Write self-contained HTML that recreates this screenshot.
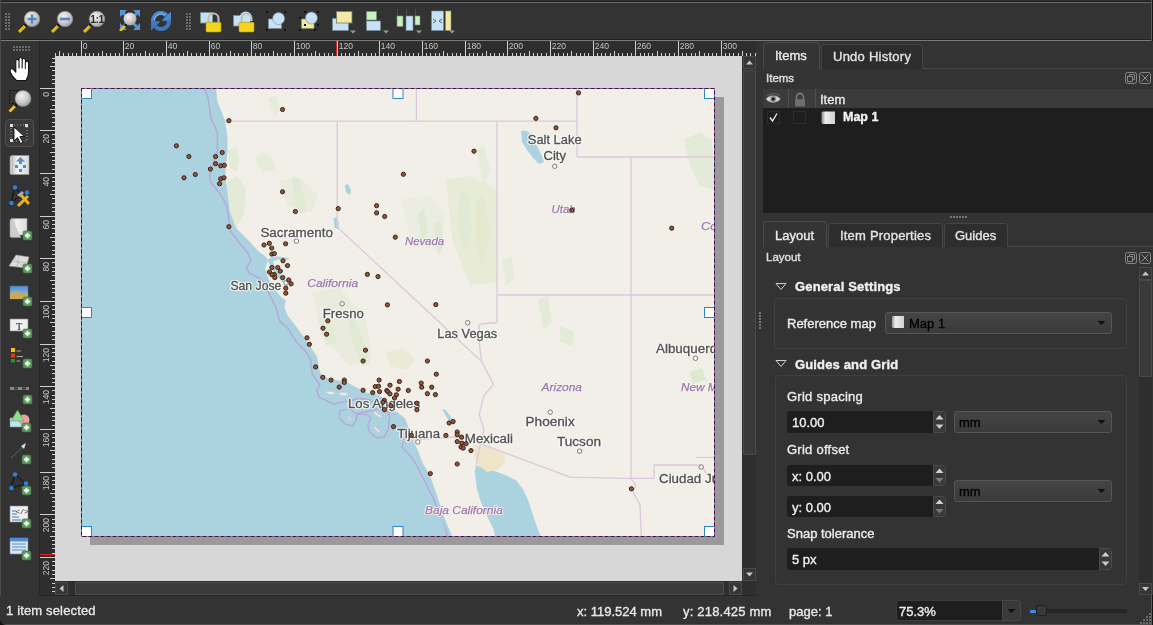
<!DOCTYPE html>
<html><head><meta charset="utf-8">
<style>
*{box-sizing:border-box;margin:0;padding:0}
html,body{width:1153px;height:625px;overflow:hidden;background:#323232;font-family:"Liberation Sans",sans-serif;color:#e0e0e0}
.a{position:absolute}
.t{white-space:nowrap;line-height:1;will-change:transform;-webkit-text-stroke:0.35px currentColor}
svg{will-change:transform}

</style></head><body>
<div class="a" style="left:0px;top:0px;width:1153px;height:1px;background:#2f2f2f;"></div>
<div class="a" style="left:0px;top:1px;width:1153px;height:1px;background:#1f1f1f;"></div>
<div class="a" style="left:0px;top:2px;width:1153px;height:1px;background:#6a6a6a;"></div>
<div class="a" style="left:0px;top:3px;width:1153px;height:36px;background:#333;"></div>
<div class="a" style="left:0px;top:39px;width:1153px;height:1px;background:#222;"></div>
<div class="a" style="left:0px;top:40px;width:1153px;height:1px;background:#7a7a7a;"></div>
<div class="a" style="left:0px;top:41px;width:39px;height:554px;background:#333;"></div>
<div class="a" style="left:39px;top:41px;width:1px;height:554px;background:#262626;"></div>
<div class="a" style="left:0px;top:0px;width:1px;height:625px;background:#4a4a4a;"></div>
<svg width="0" height="0" style="position:absolute">
<defs>
<radialGradient id="lens" cx="0.4" cy="0.35" r="0.7"><stop offset="0" stop-color="#f4f4f4"/><stop offset="0.6" stop-color="#c8c8c8"/><stop offset="1" stop-color="#9a9a9a"/></radialGradient>
<linearGradient id="blueg" x1="0" y1="0" x2="0" y2="1"><stop offset="0" stop-color="#7fb2e5"/><stop offset="1" stop-color="#3f7fc4"/></linearGradient>
<linearGradient id="paper" x1="0" y1="0" x2="1" y2="0"><stop offset="0" stop-color="#c8c8c8"/><stop offset="0.3" stop-color="#f0f0f0"/><stop offset="1" stop-color="#dcdcdc"/></linearGradient>
<linearGradient id="sky" x1="0" y1="0" x2="0" y2="1"><stop offset="0" stop-color="#4a8fd6"/><stop offset="1" stop-color="#a9cdee"/></linearGradient>
</defs></svg>
<div class="a" style="left:5px;top:13px;width:2px;height:2px;background:#6c6c6c"></div><div class="a" style="left:8px;top:13px;width:2px;height:2px;background:#6c6c6c"></div><div class="a" style="left:5px;top:16px;width:2px;height:2px;background:#6c6c6c"></div><div class="a" style="left:8px;top:16px;width:2px;height:2px;background:#6c6c6c"></div><div class="a" style="left:5px;top:19px;width:2px;height:2px;background:#6c6c6c"></div><div class="a" style="left:8px;top:19px;width:2px;height:2px;background:#6c6c6c"></div><div class="a" style="left:5px;top:22px;width:2px;height:2px;background:#6c6c6c"></div><div class="a" style="left:8px;top:22px;width:2px;height:2px;background:#6c6c6c"></div><div class="a" style="left:5px;top:25px;width:2px;height:2px;background:#6c6c6c"></div><div class="a" style="left:8px;top:25px;width:2px;height:2px;background:#6c6c6c"></div><div class="a" style="left:5px;top:28px;width:2px;height:2px;background:#6c6c6c"></div><div class="a" style="left:8px;top:28px;width:2px;height:2px;background:#6c6c6c"></div>
<svg class="a" style="left:15.5px;top:6.600000000000001px" width="28" height="28" viewBox="0 0 28 28"><line x1="3" y1="25" x2="9" y2="19" stroke="#e8c81a" stroke-width="3"/>
<line x1="3.5" y1="24.5" x2="8.5" y2="19.5" stroke="#a88a10" stroke-width="1" stroke-dasharray="1 1.5"/>
<circle cx="10" cy="18" r="1.6" fill="#111"/>
<circle cx="16" cy="12" r="7.8" fill="url(#lens)" stroke="#8a8a8a" stroke-width="0.6"/><path d="M16 7.5V16.5M11.5 12H20.5" stroke="#4f86c6" stroke-width="2.6"/></svg>
<svg class="a" style="left:48.5px;top:6.600000000000001px" width="28" height="28" viewBox="0 0 28 28"><line x1="3" y1="25" x2="9" y2="19" stroke="#e8c81a" stroke-width="3"/>
<line x1="3.5" y1="24.5" x2="8.5" y2="19.5" stroke="#a88a10" stroke-width="1" stroke-dasharray="1 1.5"/>
<circle cx="10" cy="18" r="1.6" fill="#111"/>
<circle cx="16" cy="12" r="7.8" fill="url(#lens)" stroke="#8a8a8a" stroke-width="0.6"/><path d="M11 12H21" stroke="#4f86c6" stroke-width="2.6"/></svg>
<svg class="a" style="left:81.3px;top:6.600000000000001px" width="28" height="28" viewBox="0 0 28 28"><line x1="3" y1="25" x2="9" y2="19" stroke="#e8c81a" stroke-width="3"/>
<line x1="3.5" y1="24.5" x2="8.5" y2="19.5" stroke="#a88a10" stroke-width="1" stroke-dasharray="1 1.5"/>
<circle cx="10" cy="18" r="1.6" fill="#111"/>
<circle cx="16" cy="12" r="7.8" fill="url(#lens)" stroke="#8a8a8a" stroke-width="0.6"/><text x="16" y="15.8" text-anchor="middle" font-size="10.5" font-weight="700" fill="#2a2a2a" font-family="Liberation Sans" letter-spacing="-0.6">1:1</text></svg>
<svg class="a" style="left:119px;top:9px" width="22" height="22" viewBox="0 0 22 22"><path d="M1 1H8L5.5 3.5L8.5 6.5L6.5 8.5L3.5 5.5L1 8Z" fill="#5b93d3"/>
<path d="M21 1H14L16.5 3.5L13.5 6.5L15.5 8.5L18.5 5.5L21 8Z" fill="#5b93d3"/>
<path d="M1 21H8L5.5 18.5L8.5 15.5L6.5 13.5L3.5 16.5L1 14Z" fill="#5b93d3"/>
<path d="M21 21H14L16.5 18.5L13.5 15.5L15.5 13.5L18.5 16.5L21 14Z" fill="#5b93d3"/>
<circle cx="11" cy="10" r="6.5" fill="url(#lens)"/>
<line x1="1" y1="22" x2="6" y2="17" stroke="#e8c81a" stroke-width="2.6"/><circle cx="6.5" cy="16" r="1.3" fill="#111"/></svg>
<svg class="a" style="left:150px;top:10px" width="22" height="22" viewBox="0 0 22 22"><path d="M3.2 12.5A7.8 7.8 0 0 1 16.5 5.5" stroke="#4f8ad0" stroke-width="4.2" fill="none"/>
<polygon points="21,1.5 21,11.5 11.5,10.5" fill="#4f8ad0"/>
<path d="M18.8 9.5A7.8 7.8 0 0 1 5.5 16.5" stroke="#3f78c0" stroke-width="4.2" fill="none"/>
<polygon points="1,20.5 1,10.5 10.5,11.5" fill="#3f78c0"/>
<path d="M4.5 10A6.5 6.5 0 0 1 15 5" stroke="#8fc0ee" stroke-width="1" fill="none"/></svg>
<div class="a" style="left:186px;top:13px;width:2px;height:2px;background:#6c6c6c"></div><div class="a" style="left:189px;top:13px;width:2px;height:2px;background:#6c6c6c"></div><div class="a" style="left:186px;top:16px;width:2px;height:2px;background:#6c6c6c"></div><div class="a" style="left:189px;top:16px;width:2px;height:2px;background:#6c6c6c"></div><div class="a" style="left:186px;top:19px;width:2px;height:2px;background:#6c6c6c"></div><div class="a" style="left:189px;top:19px;width:2px;height:2px;background:#6c6c6c"></div><div class="a" style="left:186px;top:22px;width:2px;height:2px;background:#6c6c6c"></div><div class="a" style="left:189px;top:22px;width:2px;height:2px;background:#6c6c6c"></div><div class="a" style="left:186px;top:25px;width:2px;height:2px;background:#6c6c6c"></div><div class="a" style="left:189px;top:25px;width:2px;height:2px;background:#6c6c6c"></div><div class="a" style="left:186px;top:28px;width:2px;height:2px;background:#6c6c6c"></div><div class="a" style="left:189px;top:28px;width:2px;height:2px;background:#6c6c6c"></div>
<svg class="a" style="left:198px;top:10px" width="26" height="24" viewBox="0 0 26 24"><rect x="2.5" y="2.5" width="12" height="10.5" fill="#c6e2f6" stroke="#7a8a96" stroke-width="0.8"/>
<path d="M10.5 12.5V8.5A5 5 0 0 1 20.5 8.5V12.5" fill="none" stroke="#bdbdbd" stroke-width="2.2"/>
<rect x="8" y="12.2" width="15" height="9.8" rx="1.2" fill="#f0d41e" stroke="#b49a10" stroke-width="0.6"/></svg>
<svg class="a" style="left:231px;top:10px" width="26" height="24" viewBox="0 0 26 24"><rect x="2.5" y="5.5" width="8" height="10.5" fill="#c6e2f6" stroke="#7a8a96" stroke-width="0.8"/>
<circle cx="14.8" cy="7.5" r="6" fill="#c6e2f6"/>
<path d="M10.5 12.5V8.5A5 5 0 0 1 20.5 8.5V11" fill="none" stroke="#bdbdbd" stroke-width="2"/>
<rect x="8" y="12.2" width="15" height="9.8" rx="1.2" fill="#f0d41e" stroke="#b49a10" stroke-width="0.6"/></svg>
<svg class="a" style="left:264px;top:9px" width="26" height="24" viewBox="0 0 26 24"><rect x="4.5" y="10" width="13" height="9.5" fill="#c6e2f6" stroke="#7a8a96" stroke-width="0.6"/>
<circle cx="14.6" cy="9.6" r="6" fill="#c6e2f6" stroke="#7a8a96" stroke-width="0.6"/>
<rect x="2" y="2" width="2" height="2" fill="#111"/><rect x="20" y="2" width="2" height="2" fill="#111"/>
<rect x="2" y="20" width="2" height="2" fill="#111"/><rect x="20" y="20" width="2" height="2" fill="#111"/></svg>
<svg class="a" style="left:297px;top:9px" width="26" height="24" viewBox="0 0 26 24"><rect x="4.5" y="10" width="12.5" height="9.5" fill="#f2eaa0" stroke="#7a8a6a" stroke-width="0.6"/>
<circle cx="14.4" cy="9" r="6" fill="#c6e2f6" stroke="#7a8a96" stroke-width="0.6"/>
<rect x="7" y="2" width="2" height="2" fill="#111"/><rect x="20" y="2" width="2" height="2" fill="#111"/>
<rect x="2" y="8" width="2" height="2" fill="#111"/><rect x="20" y="15" width="2" height="2" fill="#111"/>
<rect x="7" y="15" width="2" height="2" fill="#111"/>
<rect x="2" y="20" width="2" height="2" fill="#111"/><rect x="17" y="20" width="2" height="2" fill="#111"/></svg>
<svg class="a" style="left:330px;top:9px" width="28" height="26" viewBox="0 0 28 26"><rect x="2.5" y="9.5" width="16" height="12" fill="#c6e2f6" stroke="#7a8a96" stroke-width="0.6"/>
<rect x="6.5" y="2.5" width="15.5" height="11.5" fill="#f2eaa0" stroke="#7a7a6a" stroke-width="0.8"/><polygon points="20,21.5 26,21.5 23,24.5" fill="#9a9a9a"/></svg>
<svg class="a" style="left:364px;top:9px" width="28" height="26" viewBox="0 0 28 26"><rect x="2.5" y="2.5" width="10" height="8.5" fill="#c6f2c0" stroke="#7a8a7a" stroke-width="0.6"/>
<rect x="2.5" y="12" width="14" height="9.5" fill="#c6e2f6" stroke="#7a8a96" stroke-width="0.6"/><polygon points="19,21.5 25,21.5 22,24.5" fill="#9a9a9a"/></svg>
<svg class="a" style="left:395px;top:9px" width="30" height="26" viewBox="0 0 30 26"><path d="M2.5 0V7M11.5 0V9M20.5 0V9" stroke="#555" stroke-width="0.8"/>
<rect x="2" y="7" width="6" height="10.5" fill="#c6f2c0" stroke="#7a8a7a" stroke-width="0.6"/>
<rect x="11" y="7" width="7" height="14.5" fill="#c6e2f6" stroke="#7a8a96" stroke-width="0.6"/>
<rect x="20" y="7" width="5" height="9" fill="#c6f2c0" stroke="#7a8a7a" stroke-width="0.6"/><polygon points="21,21.5 27,21.5 24,24.5" fill="#9a9a9a"/></svg>
<svg class="a" style="left:429px;top:9px" width="30" height="26" viewBox="0 0 30 26"><rect x="2.5" y="2" width="12" height="19.5" fill="#c6e2f6" stroke="#7a8a96" stroke-width="0.6"/>
<path d="M4 10L7 12L4 14M13 10L10 12L13 14" fill="none" stroke="#555" stroke-width="0.9"/>
<rect x="16.5" y="2" width="5.5" height="19.5" fill="#f2eaa0" stroke="#8a8a6a" stroke-width="0.6"/><polygon points="20,21.5 26,21.5 23,24.5" fill="#9a9a9a"/></svg>
<div class="a" style="left:13px;top:46px;width:2px;height:2px;background:#6c6c6c"></div><div class="a" style="left:16px;top:46px;width:2px;height:2px;background:#6c6c6c"></div><div class="a" style="left:19px;top:46px;width:2px;height:2px;background:#6c6c6c"></div><div class="a" style="left:22px;top:46px;width:2px;height:2px;background:#6c6c6c"></div><div class="a" style="left:25px;top:46px;width:2px;height:2px;background:#6c6c6c"></div><div class="a" style="left:28px;top:46px;width:2px;height:2px;background:#6c6c6c"></div><div class="a" style="left:13px;top:49px;width:2px;height:2px;background:#6c6c6c"></div><div class="a" style="left:16px;top:49px;width:2px;height:2px;background:#6c6c6c"></div><div class="a" style="left:19px;top:49px;width:2px;height:2px;background:#6c6c6c"></div><div class="a" style="left:22px;top:49px;width:2px;height:2px;background:#6c6c6c"></div><div class="a" style="left:25px;top:49px;width:2px;height:2px;background:#6c6c6c"></div><div class="a" style="left:28px;top:49px;width:2px;height:2px;background:#6c6c6c"></div>
<svg class="a" style="left:9px;top:56px" width="22" height="26" viewBox="0 0 22 26"><path d="M7.5 24.5C4.5 21.5 1 16.5 1 14.5C1 12.5 3.2 12.2 4.8 13.8L6.8 16.2V5.2C6.8 3 10 3 10 5.2V12V3.2C10 1 13.2 1 13.2 3.2V12V4.2C13.2 2 16.4 2 16.4 4.2V12.5V6.8C16.4 4.6 19.6 4.6 19.6 6.8V15.5C19.6 19.5 18.5 22 17 24.5Z" fill="#fff" stroke="#111" stroke-width="1.1" stroke-linejoin="round"/>
<path d="M10 12V8M13.2 12V8M16.4 12.5V9" stroke="#777" stroke-width="0.6"/></svg>
<svg class="a" style="left:8px;top:89px" width="26" height="25" viewBox="0 0 26 25"><rect x="1.5" y="1.5" width="8" height="13" fill="none" stroke="#111" stroke-width="1" stroke-dasharray="2 1.5"/>
<line x1="1.5" y1="22.5" x2="7" y2="17" stroke="#e8c81a" stroke-width="2.8"/><circle cx="8" cy="16" r="1.5" fill="#111"/>
<circle cx="15" cy="9.5" r="8" fill="url(#lens)" stroke="#8a8a8a" stroke-width="0.6"/></svg>
<div class="a" style="left:5px;top:119px;width:29px;height:28px;background:#3a3a3a;border:1px solid #505050;border-radius:4px"></div>
<svg class="a" style="left:9px;top:123px" width="22" height="22" viewBox="0 0 22 22"><rect x="2" y="2" width="16" height="16" fill="none" stroke="#bbb" stroke-width="0.8" stroke-dasharray="1 2"/>
<rect x="1" y="1" width="3" height="3" fill="#ddd"/><rect x="16" y="1" width="3" height="3" fill="#ddd"/><rect x="1" y="16" width="3" height="3" fill="#ddd"/>
<path d="M5 4L5 18L8.5 14.5L11.5 20.5L13.8 19.3L10.8 13.5L15.5 13.5Z" fill="#fff" stroke="#111" stroke-width="0.9"/></svg>
<svg class="a" style="left:9px;top:154px" width="22" height="22" viewBox="0 0 22 22"><path d="M3 1.5H20V20.5H3Z" fill="url(#paper)" stroke="#999" stroke-width="0.6"/>
<path d="M3 1.5C1.5 1.5 1 3 1 4V19C1 20 2 20.5 3 20.5" fill="#ccc" stroke="#999" stroke-width="0.6"/>
<path d="M11.5 3L16 7.5H13V10H10V7.5H7Z" fill="#4f8fd6"/>
<rect x="6" y="11" width="3" height="3" fill="#4f8fd6"/><rect x="14" y="11" width="3" height="3" fill="#4f8fd6"/><rect x="10" y="15" width="3" height="3" fill="#4f8fd6"/></svg>
<svg class="a" style="left:9px;top:185px" width="23" height="23" viewBox="0 0 23 23"><path d="M6 2L2 18L12 10Z" fill="none" stroke="#111" stroke-width="1"/>
<circle cx="6" cy="2.5" r="2.2" fill="#2f7fe0"/><circle cx="2.5" cy="18" r="2.2" fill="#2f7fe0"/><circle cx="18" cy="7.5" r="2.2" fill="#2f7fe0"/>
<path d="M9 21L19 11" stroke="#e8b21a" stroke-width="3"/><path d="M11 9L20 19" stroke="#e8b21a" stroke-width="3"/>
<path d="M8 10L13 6L15 8L11 12Z" fill="#aaa"/></svg>
<svg class="a" style="left:9px;top:217px" width="24" height="24" viewBox="0 0 24 24"><path d="M3 1.5H18V18H3Z" fill="url(#paper)" stroke="#999" stroke-width="0.6"/>
<path d="M3 1.5C1.5 1.5 1 3 1 4V19C1 20 2 20.5 3 20.5H12" fill="#ccc" stroke="#999" stroke-width="0.6"/><rect x="14" y="14" width="9" height="9" rx="1.5" fill="#5a9a5a" stroke="#3d6e3d" stroke-width="0.6"/><path d="M18.5 15.8V21.2M15.8 18.5H21.2" stroke="#fff" stroke-width="1.8"/></svg>
<svg class="a" style="left:8px;top:252px" width="25" height="22" viewBox="0 0 25 22"><path d="M1 14L8 3L21 5L18 16Z" fill="#ddd" stroke="#999" stroke-width="0.6"/>
<path d="M4 9L19 11M6 6L15 15M11 4L9 15" stroke="#aaa" stroke-width="0.6"/><rect x="15" y="12" width="9" height="9" rx="1.5" fill="#5a9a5a" stroke="#3d6e3d" stroke-width="0.6"/><path d="M19.5 13.8V19.2M16.8 16.5H22.2" stroke="#fff" stroke-width="1.8"/></svg>
<svg class="a" style="left:9px;top:285px" width="24" height="22" viewBox="0 0 24 22"><rect x="1" y="1" width="18" height="13" fill="url(#sky)" stroke="#666" stroke-width="0.6"/>
<path d="M1 14V9C6 5 10 6 14 9L19 8V14Z" fill="#c9a85a"/><rect x="14" y="12" width="9" height="9" rx="1.5" fill="#5a9a5a" stroke="#3d6e3d" stroke-width="0.6"/><path d="M18.5 13.8V19.2M15.8 16.5H21.2" stroke="#fff" stroke-width="1.8"/></svg>
<svg class="a" style="left:9px;top:317px" width="24" height="22" viewBox="0 0 24 22"><rect x="1" y="2" width="18" height="12" fill="#f0f0f0" stroke="#888" stroke-width="0.6"/>
<text x="10" y="12.5" text-anchor="middle" font-size="11" fill="#222" font-family="Liberation Serif">T</text><rect x="14" y="12" width="9" height="9" rx="1.5" fill="#5a9a5a" stroke="#3d6e3d" stroke-width="0.6"/><path d="M18.5 13.8V19.2M15.8 16.5H21.2" stroke="#fff" stroke-width="1.8"/></svg>
<svg class="a" style="left:9px;top:347px" width="24" height="22" viewBox="0 0 24 22"><rect x="2" y="1" width="4" height="4" fill="#f5c400"/><rect x="2" y="6.5" width="4" height="4" fill="#e84000"/><rect x="2" y="12" width="4" height="3.5" fill="#1a9a30"/>
<path d="M7.5 4H12M7.5 9.5H14M7.5 14H11" stroke="#aaa" stroke-width="1.2"/><rect x="14" y="12" width="9" height="9" rx="1.5" fill="#5a9a5a" stroke="#3d6e3d" stroke-width="0.6"/><path d="M18.5 13.8V19.2M15.8 16.5H21.2" stroke="#fff" stroke-width="1.8"/></svg>
<svg class="a" style="left:9px;top:385px" width="24" height="22" viewBox="0 0 24 22"><rect x="1" y="2" width="19" height="3" fill="#888"/><rect x="5" y="2.5" width="4" height="2" fill="#333"/><rect x="13" y="2.5" width="4" height="2" fill="#333"/><rect x="14" y="10" width="9" height="9" rx="1.5" fill="#5a9a5a" stroke="#3d6e3d" stroke-width="0.6"/><path d="M18.5 11.8V17.2M15.8 14.5H21.2" stroke="#fff" stroke-width="1.8"/></svg>
<svg class="a" style="left:9px;top:409px" width="24" height="24" viewBox="0 0 24 24"><rect x="1" y="9" width="12" height="9" fill="#c6e2f6" stroke="#7a8a96" stroke-width="0.6"/>
<circle cx="15" cy="11" r="5.5" fill="#f0a0a0"/>
<path d="M8.5 1L15 12H2Z" fill="#8fdc8f" stroke="#6a9a6a" stroke-width="0.6"/><rect x="13" y="14" width="9" height="9" rx="1.5" fill="#5a9a5a" stroke="#3d6e3d" stroke-width="0.6"/><path d="M17.5 15.8V21.2M14.8 18.5H20.2" stroke="#fff" stroke-width="1.8"/></svg>
<svg class="a" style="left:9px;top:441px" width="24" height="24" viewBox="0 0 24 24"><path d="M2 17L15 5" stroke="#666" stroke-width="1"/><polygon points="17,2 15,8 12,5" fill="#ddd"/><rect x="13" y="14" width="9" height="9" rx="1.5" fill="#5a9a5a" stroke="#3d6e3d" stroke-width="0.6"/><path d="M17.5 15.8V21.2M14.8 18.5H20.2" stroke="#fff" stroke-width="1.8"/></svg>
<svg class="a" style="left:9px;top:472px" width="24" height="24" viewBox="0 0 24 24"><path d="M6 2L2 16L17 12Z" fill="none" stroke="#111" stroke-width="1"/>
<circle cx="6" cy="2.5" r="2.2" fill="#2f7fe0"/><circle cx="2.5" cy="16" r="2.2" fill="#2f7fe0"/><circle cx="17" cy="11.5" r="2.2" fill="#2f7fe0"/><rect x="13" y="14" width="9" height="9" rx="1.5" fill="#5a9a5a" stroke="#3d6e3d" stroke-width="0.6"/><path d="M17.5 15.8V21.2M14.8 18.5H20.2" stroke="#fff" stroke-width="1.8"/></svg>
<svg class="a" style="left:9px;top:505px" width="24" height="24" viewBox="0 0 24 24"><rect x="1" y="1" width="18" height="16" fill="#f0f0f0" stroke="#888" stroke-width="0.6"/>
<path d="M3 6H7M3 9H8M3 12H10M3 15H12" stroke="#3a7ac0" stroke-width="1.2"/>
<text x="13" y="9" text-anchor="middle" font-size="7" fill="#222" font-family="Liberation Mono">&lt;/&gt;</text><rect x="13" y="14" width="9" height="9" rx="1.5" fill="#5a9a5a" stroke="#3d6e3d" stroke-width="0.6"/><path d="M17.5 15.8V21.2M14.8 18.5H20.2" stroke="#fff" stroke-width="1.8"/></svg>
<svg class="a" style="left:9px;top:537px" width="24" height="24" viewBox="0 0 24 24"><rect x="1" y="1" width="18" height="16" fill="#dde8f4" stroke="#5a8ac0" stroke-width="0.6"/>
<rect x="1" y="1" width="18" height="3.5" fill="#4f8fd6"/>
<path d="M3 7H17M3 10H17M3 13H17" stroke="#5a8ac0" stroke-width="1"/><rect x="13" y="14" width="9" height="9" rx="1.5" fill="#5a9a5a" stroke="#3d6e3d" stroke-width="0.6"/><path d="M17.5 15.8V21.2M14.8 18.5H20.2" stroke="#fff" stroke-width="1.8"/></svg>
<svg class="a" style="left:40px;top:41px;overflow:hidden" width="716" height="15" viewBox="40 41 716 15"><rect x="40" y="41" width="716" height="15" fill="#2e2e2e"/><line x1="55.5" y1="53" x2="55.5" y2="56" stroke="#d0d0d0" stroke-width="1"/><line x1="59.5" y1="51" x2="59.5" y2="56" stroke="#d0d0d0" stroke-width="1"/><line x1="63.5" y1="53" x2="63.5" y2="56" stroke="#d0d0d0" stroke-width="1"/><line x1="68.5" y1="53" x2="68.5" y2="56" stroke="#d0d0d0" stroke-width="1"/><line x1="72.5" y1="53" x2="72.5" y2="56" stroke="#d0d0d0" stroke-width="1"/><line x1="76.5" y1="53" x2="76.5" y2="56" stroke="#d0d0d0" stroke-width="1"/><line x1="81.5" y1="41" x2="81.5" y2="56" stroke="#d0d0d0" stroke-width="1"/><text x="82.8" y="48.9" font-size="8.6" fill="#c4c4c4" font-family="Liberation Sans">0</text><line x1="85.5" y1="53" x2="85.5" y2="56" stroke="#d0d0d0" stroke-width="1"/><line x1="89.5" y1="53" x2="89.5" y2="56" stroke="#d0d0d0" stroke-width="1"/><line x1="93.5" y1="53" x2="93.5" y2="56" stroke="#d0d0d0" stroke-width="1"/><line x1="98.5" y1="53" x2="98.5" y2="56" stroke="#d0d0d0" stroke-width="1"/><line x1="102.5" y1="51" x2="102.5" y2="56" stroke="#d0d0d0" stroke-width="1"/><line x1="106.5" y1="53" x2="106.5" y2="56" stroke="#d0d0d0" stroke-width="1"/><line x1="110.5" y1="53" x2="110.5" y2="56" stroke="#d0d0d0" stroke-width="1"/><line x1="115.5" y1="53" x2="115.5" y2="56" stroke="#d0d0d0" stroke-width="1"/><line x1="119.5" y1="53" x2="119.5" y2="56" stroke="#d0d0d0" stroke-width="1"/><line x1="123.5" y1="41" x2="123.5" y2="56" stroke="#d0d0d0" stroke-width="1"/><text x="124.8" y="48.9" font-size="8.6" fill="#c4c4c4" font-family="Liberation Sans">20</text><line x1="127.5" y1="53" x2="127.5" y2="56" stroke="#d0d0d0" stroke-width="1"/><line x1="132.5" y1="53" x2="132.5" y2="56" stroke="#d0d0d0" stroke-width="1"/><line x1="136.5" y1="53" x2="136.5" y2="56" stroke="#d0d0d0" stroke-width="1"/><line x1="140.5" y1="53" x2="140.5" y2="56" stroke="#d0d0d0" stroke-width="1"/><line x1="145.5" y1="51" x2="145.5" y2="56" stroke="#d0d0d0" stroke-width="1"/><line x1="149.5" y1="53" x2="149.5" y2="56" stroke="#d0d0d0" stroke-width="1"/><line x1="153.5" y1="53" x2="153.5" y2="56" stroke="#d0d0d0" stroke-width="1"/><line x1="157.5" y1="53" x2="157.5" y2="56" stroke="#d0d0d0" stroke-width="1"/><line x1="162.5" y1="53" x2="162.5" y2="56" stroke="#d0d0d0" stroke-width="1"/><line x1="166.5" y1="41" x2="166.5" y2="56" stroke="#d0d0d0" stroke-width="1"/><text x="167.8" y="48.9" font-size="8.6" fill="#c4c4c4" font-family="Liberation Sans">40</text><line x1="170.5" y1="53" x2="170.5" y2="56" stroke="#d0d0d0" stroke-width="1"/><line x1="174.5" y1="53" x2="174.5" y2="56" stroke="#d0d0d0" stroke-width="1"/><line x1="179.5" y1="53" x2="179.5" y2="56" stroke="#d0d0d0" stroke-width="1"/><line x1="183.5" y1="53" x2="183.5" y2="56" stroke="#d0d0d0" stroke-width="1"/><line x1="187.5" y1="51" x2="187.5" y2="56" stroke="#d0d0d0" stroke-width="1"/><line x1="191.5" y1="53" x2="191.5" y2="56" stroke="#d0d0d0" stroke-width="1"/><line x1="196.5" y1="53" x2="196.5" y2="56" stroke="#d0d0d0" stroke-width="1"/><line x1="200.5" y1="53" x2="200.5" y2="56" stroke="#d0d0d0" stroke-width="1"/><line x1="204.5" y1="53" x2="204.5" y2="56" stroke="#d0d0d0" stroke-width="1"/><line x1="209.5" y1="41" x2="209.5" y2="56" stroke="#d0d0d0" stroke-width="1"/><text x="210.8" y="48.9" font-size="8.6" fill="#c4c4c4" font-family="Liberation Sans">60</text><line x1="213.5" y1="53" x2="213.5" y2="56" stroke="#d0d0d0" stroke-width="1"/><line x1="217.5" y1="53" x2="217.5" y2="56" stroke="#d0d0d0" stroke-width="1"/><line x1="221.5" y1="53" x2="221.5" y2="56" stroke="#d0d0d0" stroke-width="1"/><line x1="226.5" y1="53" x2="226.5" y2="56" stroke="#d0d0d0" stroke-width="1"/><line x1="230.5" y1="51" x2="230.5" y2="56" stroke="#d0d0d0" stroke-width="1"/><line x1="234.5" y1="53" x2="234.5" y2="56" stroke="#d0d0d0" stroke-width="1"/><line x1="238.5" y1="53" x2="238.5" y2="56" stroke="#d0d0d0" stroke-width="1"/><line x1="243.5" y1="53" x2="243.5" y2="56" stroke="#d0d0d0" stroke-width="1"/><line x1="247.5" y1="53" x2="247.5" y2="56" stroke="#d0d0d0" stroke-width="1"/><line x1="251.5" y1="41" x2="251.5" y2="56" stroke="#d0d0d0" stroke-width="1"/><text x="252.8" y="48.9" font-size="8.6" fill="#c4c4c4" font-family="Liberation Sans">80</text><line x1="255.5" y1="53" x2="255.5" y2="56" stroke="#d0d0d0" stroke-width="1"/><line x1="260.5" y1="53" x2="260.5" y2="56" stroke="#d0d0d0" stroke-width="1"/><line x1="264.5" y1="53" x2="264.5" y2="56" stroke="#d0d0d0" stroke-width="1"/><line x1="268.5" y1="53" x2="268.5" y2="56" stroke="#d0d0d0" stroke-width="1"/><line x1="273.5" y1="51" x2="273.5" y2="56" stroke="#d0d0d0" stroke-width="1"/><line x1="277.5" y1="53" x2="277.5" y2="56" stroke="#d0d0d0" stroke-width="1"/><line x1="281.5" y1="53" x2="281.5" y2="56" stroke="#d0d0d0" stroke-width="1"/><line x1="285.5" y1="53" x2="285.5" y2="56" stroke="#d0d0d0" stroke-width="1"/><line x1="290.5" y1="53" x2="290.5" y2="56" stroke="#d0d0d0" stroke-width="1"/><line x1="294.5" y1="41" x2="294.5" y2="56" stroke="#d0d0d0" stroke-width="1"/><text x="295.8" y="48.9" font-size="8.6" fill="#c4c4c4" font-family="Liberation Sans">100</text><line x1="298.5" y1="53" x2="298.5" y2="56" stroke="#d0d0d0" stroke-width="1"/><line x1="302.5" y1="53" x2="302.5" y2="56" stroke="#d0d0d0" stroke-width="1"/><line x1="307.5" y1="53" x2="307.5" y2="56" stroke="#d0d0d0" stroke-width="1"/><line x1="311.5" y1="53" x2="311.5" y2="56" stroke="#d0d0d0" stroke-width="1"/><line x1="315.5" y1="51" x2="315.5" y2="56" stroke="#d0d0d0" stroke-width="1"/><line x1="319.5" y1="53" x2="319.5" y2="56" stroke="#d0d0d0" stroke-width="1"/><line x1="324.5" y1="53" x2="324.5" y2="56" stroke="#d0d0d0" stroke-width="1"/><line x1="328.5" y1="53" x2="328.5" y2="56" stroke="#d0d0d0" stroke-width="1"/><line x1="332.5" y1="53" x2="332.5" y2="56" stroke="#d0d0d0" stroke-width="1"/><line x1="337.5" y1="41" x2="337.5" y2="56" stroke="#d0d0d0" stroke-width="1"/><text x="338.8" y="48.9" font-size="8.6" fill="#c4c4c4" font-family="Liberation Sans">120</text><line x1="341.5" y1="53" x2="341.5" y2="56" stroke="#d0d0d0" stroke-width="1"/><line x1="345.5" y1="53" x2="345.5" y2="56" stroke="#d0d0d0" stroke-width="1"/><line x1="349.5" y1="53" x2="349.5" y2="56" stroke="#d0d0d0" stroke-width="1"/><line x1="354.5" y1="53" x2="354.5" y2="56" stroke="#d0d0d0" stroke-width="1"/><line x1="358.5" y1="51" x2="358.5" y2="56" stroke="#d0d0d0" stroke-width="1"/><line x1="362.5" y1="53" x2="362.5" y2="56" stroke="#d0d0d0" stroke-width="1"/><line x1="366.5" y1="53" x2="366.5" y2="56" stroke="#d0d0d0" stroke-width="1"/><line x1="371.5" y1="53" x2="371.5" y2="56" stroke="#d0d0d0" stroke-width="1"/><line x1="375.5" y1="53" x2="375.5" y2="56" stroke="#d0d0d0" stroke-width="1"/><line x1="379.5" y1="41" x2="379.5" y2="56" stroke="#d0d0d0" stroke-width="1"/><text x="380.8" y="48.9" font-size="8.6" fill="#c4c4c4" font-family="Liberation Sans">140</text><line x1="383.5" y1="53" x2="383.5" y2="56" stroke="#d0d0d0" stroke-width="1"/><line x1="388.5" y1="53" x2="388.5" y2="56" stroke="#d0d0d0" stroke-width="1"/><line x1="392.5" y1="53" x2="392.5" y2="56" stroke="#d0d0d0" stroke-width="1"/><line x1="396.5" y1="53" x2="396.5" y2="56" stroke="#d0d0d0" stroke-width="1"/><line x1="401.5" y1="51" x2="401.5" y2="56" stroke="#d0d0d0" stroke-width="1"/><line x1="405.5" y1="53" x2="405.5" y2="56" stroke="#d0d0d0" stroke-width="1"/><line x1="409.5" y1="53" x2="409.5" y2="56" stroke="#d0d0d0" stroke-width="1"/><line x1="413.5" y1="53" x2="413.5" y2="56" stroke="#d0d0d0" stroke-width="1"/><line x1="418.5" y1="53" x2="418.5" y2="56" stroke="#d0d0d0" stroke-width="1"/><line x1="422.5" y1="41" x2="422.5" y2="56" stroke="#d0d0d0" stroke-width="1"/><text x="423.8" y="48.9" font-size="8.6" fill="#c4c4c4" font-family="Liberation Sans">160</text><line x1="426.5" y1="53" x2="426.5" y2="56" stroke="#d0d0d0" stroke-width="1"/><line x1="430.5" y1="53" x2="430.5" y2="56" stroke="#d0d0d0" stroke-width="1"/><line x1="435.5" y1="53" x2="435.5" y2="56" stroke="#d0d0d0" stroke-width="1"/><line x1="439.5" y1="53" x2="439.5" y2="56" stroke="#d0d0d0" stroke-width="1"/><line x1="443.5" y1="51" x2="443.5" y2="56" stroke="#d0d0d0" stroke-width="1"/><line x1="447.5" y1="53" x2="447.5" y2="56" stroke="#d0d0d0" stroke-width="1"/><line x1="452.5" y1="53" x2="452.5" y2="56" stroke="#d0d0d0" stroke-width="1"/><line x1="456.5" y1="53" x2="456.5" y2="56" stroke="#d0d0d0" stroke-width="1"/><line x1="460.5" y1="53" x2="460.5" y2="56" stroke="#d0d0d0" stroke-width="1"/><line x1="465.5" y1="41" x2="465.5" y2="56" stroke="#d0d0d0" stroke-width="1"/><text x="466.8" y="48.9" font-size="8.6" fill="#c4c4c4" font-family="Liberation Sans">180</text><line x1="469.5" y1="53" x2="469.5" y2="56" stroke="#d0d0d0" stroke-width="1"/><line x1="473.5" y1="53" x2="473.5" y2="56" stroke="#d0d0d0" stroke-width="1"/><line x1="477.5" y1="53" x2="477.5" y2="56" stroke="#d0d0d0" stroke-width="1"/><line x1="482.5" y1="53" x2="482.5" y2="56" stroke="#d0d0d0" stroke-width="1"/><line x1="486.5" y1="51" x2="486.5" y2="56" stroke="#d0d0d0" stroke-width="1"/><line x1="490.5" y1="53" x2="490.5" y2="56" stroke="#d0d0d0" stroke-width="1"/><line x1="494.5" y1="53" x2="494.5" y2="56" stroke="#d0d0d0" stroke-width="1"/><line x1="499.5" y1="53" x2="499.5" y2="56" stroke="#d0d0d0" stroke-width="1"/><line x1="503.5" y1="53" x2="503.5" y2="56" stroke="#d0d0d0" stroke-width="1"/><line x1="507.5" y1="41" x2="507.5" y2="56" stroke="#d0d0d0" stroke-width="1"/><text x="508.8" y="48.9" font-size="8.6" fill="#c4c4c4" font-family="Liberation Sans">200</text><line x1="512.5" y1="53" x2="512.5" y2="56" stroke="#d0d0d0" stroke-width="1"/><line x1="516.5" y1="53" x2="516.5" y2="56" stroke="#d0d0d0" stroke-width="1"/><line x1="520.5" y1="53" x2="520.5" y2="56" stroke="#d0d0d0" stroke-width="1"/><line x1="524.5" y1="53" x2="524.5" y2="56" stroke="#d0d0d0" stroke-width="1"/><line x1="529.5" y1="51" x2="529.5" y2="56" stroke="#d0d0d0" stroke-width="1"/><line x1="533.5" y1="53" x2="533.5" y2="56" stroke="#d0d0d0" stroke-width="1"/><line x1="537.5" y1="53" x2="537.5" y2="56" stroke="#d0d0d0" stroke-width="1"/><line x1="541.5" y1="53" x2="541.5" y2="56" stroke="#d0d0d0" stroke-width="1"/><line x1="546.5" y1="53" x2="546.5" y2="56" stroke="#d0d0d0" stroke-width="1"/><line x1="550.5" y1="41" x2="550.5" y2="56" stroke="#d0d0d0" stroke-width="1"/><text x="551.8" y="48.9" font-size="8.6" fill="#c4c4c4" font-family="Liberation Sans">220</text><line x1="554.5" y1="53" x2="554.5" y2="56" stroke="#d0d0d0" stroke-width="1"/><line x1="558.5" y1="53" x2="558.5" y2="56" stroke="#d0d0d0" stroke-width="1"/><line x1="563.5" y1="53" x2="563.5" y2="56" stroke="#d0d0d0" stroke-width="1"/><line x1="567.5" y1="53" x2="567.5" y2="56" stroke="#d0d0d0" stroke-width="1"/><line x1="571.5" y1="51" x2="571.5" y2="56" stroke="#d0d0d0" stroke-width="1"/><line x1="576.5" y1="53" x2="576.5" y2="56" stroke="#d0d0d0" stroke-width="1"/><line x1="580.5" y1="53" x2="580.5" y2="56" stroke="#d0d0d0" stroke-width="1"/><line x1="584.5" y1="53" x2="584.5" y2="56" stroke="#d0d0d0" stroke-width="1"/><line x1="588.5" y1="53" x2="588.5" y2="56" stroke="#d0d0d0" stroke-width="1"/><line x1="593.5" y1="41" x2="593.5" y2="56" stroke="#d0d0d0" stroke-width="1"/><text x="594.8" y="48.9" font-size="8.6" fill="#c4c4c4" font-family="Liberation Sans">240</text><line x1="597.5" y1="53" x2="597.5" y2="56" stroke="#d0d0d0" stroke-width="1"/><line x1="601.5" y1="53" x2="601.5" y2="56" stroke="#d0d0d0" stroke-width="1"/><line x1="605.5" y1="53" x2="605.5" y2="56" stroke="#d0d0d0" stroke-width="1"/><line x1="610.5" y1="53" x2="610.5" y2="56" stroke="#d0d0d0" stroke-width="1"/><line x1="614.5" y1="51" x2="614.5" y2="56" stroke="#d0d0d0" stroke-width="1"/><line x1="618.5" y1="53" x2="618.5" y2="56" stroke="#d0d0d0" stroke-width="1"/><line x1="622.5" y1="53" x2="622.5" y2="56" stroke="#d0d0d0" stroke-width="1"/><line x1="627.5" y1="53" x2="627.5" y2="56" stroke="#d0d0d0" stroke-width="1"/><line x1="631.5" y1="53" x2="631.5" y2="56" stroke="#d0d0d0" stroke-width="1"/><line x1="635.5" y1="41" x2="635.5" y2="56" stroke="#d0d0d0" stroke-width="1"/><text x="636.8" y="48.9" font-size="8.6" fill="#c4c4c4" font-family="Liberation Sans">260</text><line x1="640.5" y1="53" x2="640.5" y2="56" stroke="#d0d0d0" stroke-width="1"/><line x1="644.5" y1="53" x2="644.5" y2="56" stroke="#d0d0d0" stroke-width="1"/><line x1="648.5" y1="53" x2="648.5" y2="56" stroke="#d0d0d0" stroke-width="1"/><line x1="652.5" y1="53" x2="652.5" y2="56" stroke="#d0d0d0" stroke-width="1"/><line x1="657.5" y1="51" x2="657.5" y2="56" stroke="#d0d0d0" stroke-width="1"/><line x1="661.5" y1="53" x2="661.5" y2="56" stroke="#d0d0d0" stroke-width="1"/><line x1="665.5" y1="53" x2="665.5" y2="56" stroke="#d0d0d0" stroke-width="1"/><line x1="669.5" y1="53" x2="669.5" y2="56" stroke="#d0d0d0" stroke-width="1"/><line x1="674.5" y1="53" x2="674.5" y2="56" stroke="#d0d0d0" stroke-width="1"/><line x1="678.5" y1="41" x2="678.5" y2="56" stroke="#d0d0d0" stroke-width="1"/><text x="679.8" y="48.9" font-size="8.6" fill="#c4c4c4" font-family="Liberation Sans">280</text><line x1="682.5" y1="53" x2="682.5" y2="56" stroke="#d0d0d0" stroke-width="1"/><line x1="686.5" y1="53" x2="686.5" y2="56" stroke="#d0d0d0" stroke-width="1"/><line x1="691.5" y1="53" x2="691.5" y2="56" stroke="#d0d0d0" stroke-width="1"/><line x1="695.5" y1="53" x2="695.5" y2="56" stroke="#d0d0d0" stroke-width="1"/><line x1="699.5" y1="51" x2="699.5" y2="56" stroke="#d0d0d0" stroke-width="1"/><line x1="704.5" y1="53" x2="704.5" y2="56" stroke="#d0d0d0" stroke-width="1"/><line x1="708.5" y1="53" x2="708.5" y2="56" stroke="#d0d0d0" stroke-width="1"/><line x1="712.5" y1="53" x2="712.5" y2="56" stroke="#d0d0d0" stroke-width="1"/><line x1="716.5" y1="53" x2="716.5" y2="56" stroke="#d0d0d0" stroke-width="1"/><line x1="721.5" y1="41" x2="721.5" y2="56" stroke="#d0d0d0" stroke-width="1"/><text x="722.8" y="48.9" font-size="8.6" fill="#c4c4c4" font-family="Liberation Sans">300</text><line x1="725.5" y1="53" x2="725.5" y2="56" stroke="#d0d0d0" stroke-width="1"/><line x1="729.5" y1="53" x2="729.5" y2="56" stroke="#d0d0d0" stroke-width="1"/><line x1="733.5" y1="53" x2="733.5" y2="56" stroke="#d0d0d0" stroke-width="1"/><line x1="738.5" y1="53" x2="738.5" y2="56" stroke="#d0d0d0" stroke-width="1"/><line x1="742.5" y1="51" x2="742.5" y2="56" stroke="#d0d0d0" stroke-width="1"/><line x1="746.5" y1="53" x2="746.5" y2="56" stroke="#d0d0d0" stroke-width="1"/><line x1="750.5" y1="53" x2="750.5" y2="56" stroke="#d0d0d0" stroke-width="1"/><line x1="755.5" y1="53" x2="755.5" y2="56" stroke="#d0d0d0" stroke-width="1"/><line x1="336.5" y1="41" x2="336.5" y2="56" stroke="#e02020" stroke-width="1"/></svg>
<svg class="a" style="left:40px;top:56px;overflow:hidden" width="15" height="539" viewBox="40 56 15 539"><rect x="40" y="56" width="15" height="539" fill="#2e2e2e"/><line x1="52" y1="58.5" x2="55" y2="58.5" stroke="#d0d0d0" stroke-width="1"/><line x1="52" y1="62.5" x2="55" y2="62.5" stroke="#d0d0d0" stroke-width="1"/><line x1="50" y1="66.5" x2="55" y2="66.5" stroke="#d0d0d0" stroke-width="1"/><line x1="52" y1="70.5" x2="55" y2="70.5" stroke="#d0d0d0" stroke-width="1"/><line x1="52" y1="75.5" x2="55" y2="75.5" stroke="#d0d0d0" stroke-width="1"/><line x1="52" y1="79.5" x2="55" y2="79.5" stroke="#d0d0d0" stroke-width="1"/><line x1="52" y1="83.5" x2="55" y2="83.5" stroke="#d0d0d0" stroke-width="1"/><line x1="40" y1="88.5" x2="55" y2="88.5" stroke="#d0d0d0" stroke-width="1"/><text transform="translate(48.6,92.0) rotate(-90)" text-anchor="end" font-size="8.6" fill="#c4c4c4" font-family="Liberation Sans">0</text><line x1="52" y1="92.5" x2="55" y2="92.5" stroke="#d0d0d0" stroke-width="1"/><line x1="52" y1="96.5" x2="55" y2="96.5" stroke="#d0d0d0" stroke-width="1"/><line x1="52" y1="100.5" x2="55" y2="100.5" stroke="#d0d0d0" stroke-width="1"/><line x1="52" y1="105.5" x2="55" y2="105.5" stroke="#d0d0d0" stroke-width="1"/><line x1="50" y1="109.5" x2="55" y2="109.5" stroke="#d0d0d0" stroke-width="1"/><line x1="52" y1="113.5" x2="55" y2="113.5" stroke="#d0d0d0" stroke-width="1"/><line x1="52" y1="117.5" x2="55" y2="117.5" stroke="#d0d0d0" stroke-width="1"/><line x1="52" y1="122.5" x2="55" y2="122.5" stroke="#d0d0d0" stroke-width="1"/><line x1="52" y1="126.5" x2="55" y2="126.5" stroke="#d0d0d0" stroke-width="1"/><line x1="40" y1="130.5" x2="55" y2="130.5" stroke="#d0d0d0" stroke-width="1"/><text transform="translate(48.6,134.0) rotate(-90)" text-anchor="end" font-size="8.6" fill="#c4c4c4" font-family="Liberation Sans">20</text><line x1="52" y1="134.5" x2="55" y2="134.5" stroke="#d0d0d0" stroke-width="1"/><line x1="52" y1="139.5" x2="55" y2="139.5" stroke="#d0d0d0" stroke-width="1"/><line x1="52" y1="143.5" x2="55" y2="143.5" stroke="#d0d0d0" stroke-width="1"/><line x1="52" y1="147.5" x2="55" y2="147.5" stroke="#d0d0d0" stroke-width="1"/><line x1="50" y1="152.5" x2="55" y2="152.5" stroke="#d0d0d0" stroke-width="1"/><line x1="52" y1="156.5" x2="55" y2="156.5" stroke="#d0d0d0" stroke-width="1"/><line x1="52" y1="160.5" x2="55" y2="160.5" stroke="#d0d0d0" stroke-width="1"/><line x1="52" y1="164.5" x2="55" y2="164.5" stroke="#d0d0d0" stroke-width="1"/><line x1="52" y1="169.5" x2="55" y2="169.5" stroke="#d0d0d0" stroke-width="1"/><line x1="40" y1="173.5" x2="55" y2="173.5" stroke="#d0d0d0" stroke-width="1"/><text transform="translate(48.6,177.0) rotate(-90)" text-anchor="end" font-size="8.6" fill="#c4c4c4" font-family="Liberation Sans">40</text><line x1="52" y1="177.5" x2="55" y2="177.5" stroke="#d0d0d0" stroke-width="1"/><line x1="52" y1="181.5" x2="55" y2="181.5" stroke="#d0d0d0" stroke-width="1"/><line x1="52" y1="186.5" x2="55" y2="186.5" stroke="#d0d0d0" stroke-width="1"/><line x1="52" y1="190.5" x2="55" y2="190.5" stroke="#d0d0d0" stroke-width="1"/><line x1="50" y1="194.5" x2="55" y2="194.5" stroke="#d0d0d0" stroke-width="1"/><line x1="52" y1="198.5" x2="55" y2="198.5" stroke="#d0d0d0" stroke-width="1"/><line x1="52" y1="203.5" x2="55" y2="203.5" stroke="#d0d0d0" stroke-width="1"/><line x1="52" y1="207.5" x2="55" y2="207.5" stroke="#d0d0d0" stroke-width="1"/><line x1="52" y1="211.5" x2="55" y2="211.5" stroke="#d0d0d0" stroke-width="1"/><line x1="40" y1="216.5" x2="55" y2="216.5" stroke="#d0d0d0" stroke-width="1"/><text transform="translate(48.6,220.0) rotate(-90)" text-anchor="end" font-size="8.6" fill="#c4c4c4" font-family="Liberation Sans">60</text><line x1="52" y1="220.5" x2="55" y2="220.5" stroke="#d0d0d0" stroke-width="1"/><line x1="52" y1="224.5" x2="55" y2="224.5" stroke="#d0d0d0" stroke-width="1"/><line x1="52" y1="228.5" x2="55" y2="228.5" stroke="#d0d0d0" stroke-width="1"/><line x1="52" y1="233.5" x2="55" y2="233.5" stroke="#d0d0d0" stroke-width="1"/><line x1="50" y1="237.5" x2="55" y2="237.5" stroke="#d0d0d0" stroke-width="1"/><line x1="52" y1="241.5" x2="55" y2="241.5" stroke="#d0d0d0" stroke-width="1"/><line x1="52" y1="245.5" x2="55" y2="245.5" stroke="#d0d0d0" stroke-width="1"/><line x1="52" y1="250.5" x2="55" y2="250.5" stroke="#d0d0d0" stroke-width="1"/><line x1="52" y1="254.5" x2="55" y2="254.5" stroke="#d0d0d0" stroke-width="1"/><line x1="40" y1="258.5" x2="55" y2="258.5" stroke="#d0d0d0" stroke-width="1"/><text transform="translate(48.6,262.0) rotate(-90)" text-anchor="end" font-size="8.6" fill="#c4c4c4" font-family="Liberation Sans">80</text><line x1="52" y1="262.5" x2="55" y2="262.5" stroke="#d0d0d0" stroke-width="1"/><line x1="52" y1="267.5" x2="55" y2="267.5" stroke="#d0d0d0" stroke-width="1"/><line x1="52" y1="271.5" x2="55" y2="271.5" stroke="#d0d0d0" stroke-width="1"/><line x1="52" y1="275.5" x2="55" y2="275.5" stroke="#d0d0d0" stroke-width="1"/><line x1="50" y1="280.5" x2="55" y2="280.5" stroke="#d0d0d0" stroke-width="1"/><line x1="52" y1="284.5" x2="55" y2="284.5" stroke="#d0d0d0" stroke-width="1"/><line x1="52" y1="288.5" x2="55" y2="288.5" stroke="#d0d0d0" stroke-width="1"/><line x1="52" y1="292.5" x2="55" y2="292.5" stroke="#d0d0d0" stroke-width="1"/><line x1="52" y1="297.5" x2="55" y2="297.5" stroke="#d0d0d0" stroke-width="1"/><line x1="40" y1="301.5" x2="55" y2="301.5" stroke="#d0d0d0" stroke-width="1"/><text transform="translate(48.6,305.0) rotate(-90)" text-anchor="end" font-size="8.6" fill="#c4c4c4" font-family="Liberation Sans">100</text><line x1="52" y1="305.5" x2="55" y2="305.5" stroke="#d0d0d0" stroke-width="1"/><line x1="52" y1="309.5" x2="55" y2="309.5" stroke="#d0d0d0" stroke-width="1"/><line x1="52" y1="314.5" x2="55" y2="314.5" stroke="#d0d0d0" stroke-width="1"/><line x1="52" y1="318.5" x2="55" y2="318.5" stroke="#d0d0d0" stroke-width="1"/><line x1="50" y1="322.5" x2="55" y2="322.5" stroke="#d0d0d0" stroke-width="1"/><line x1="52" y1="326.5" x2="55" y2="326.5" stroke="#d0d0d0" stroke-width="1"/><line x1="52" y1="331.5" x2="55" y2="331.5" stroke="#d0d0d0" stroke-width="1"/><line x1="52" y1="335.5" x2="55" y2="335.5" stroke="#d0d0d0" stroke-width="1"/><line x1="52" y1="339.5" x2="55" y2="339.5" stroke="#d0d0d0" stroke-width="1"/><line x1="40" y1="344.5" x2="55" y2="344.5" stroke="#d0d0d0" stroke-width="1"/><text transform="translate(48.6,348.0) rotate(-90)" text-anchor="end" font-size="8.6" fill="#c4c4c4" font-family="Liberation Sans">120</text><line x1="52" y1="348.5" x2="55" y2="348.5" stroke="#d0d0d0" stroke-width="1"/><line x1="52" y1="352.5" x2="55" y2="352.5" stroke="#d0d0d0" stroke-width="1"/><line x1="52" y1="356.5" x2="55" y2="356.5" stroke="#d0d0d0" stroke-width="1"/><line x1="52" y1="361.5" x2="55" y2="361.5" stroke="#d0d0d0" stroke-width="1"/><line x1="50" y1="365.5" x2="55" y2="365.5" stroke="#d0d0d0" stroke-width="1"/><line x1="52" y1="369.5" x2="55" y2="369.5" stroke="#d0d0d0" stroke-width="1"/><line x1="52" y1="373.5" x2="55" y2="373.5" stroke="#d0d0d0" stroke-width="1"/><line x1="52" y1="378.5" x2="55" y2="378.5" stroke="#d0d0d0" stroke-width="1"/><line x1="52" y1="382.5" x2="55" y2="382.5" stroke="#d0d0d0" stroke-width="1"/><line x1="40" y1="386.5" x2="55" y2="386.5" stroke="#d0d0d0" stroke-width="1"/><text transform="translate(48.6,390.0) rotate(-90)" text-anchor="end" font-size="8.6" fill="#c4c4c4" font-family="Liberation Sans">140</text><line x1="52" y1="390.5" x2="55" y2="390.5" stroke="#d0d0d0" stroke-width="1"/><line x1="52" y1="395.5" x2="55" y2="395.5" stroke="#d0d0d0" stroke-width="1"/><line x1="52" y1="399.5" x2="55" y2="399.5" stroke="#d0d0d0" stroke-width="1"/><line x1="52" y1="403.5" x2="55" y2="403.5" stroke="#d0d0d0" stroke-width="1"/><line x1="50" y1="408.5" x2="55" y2="408.5" stroke="#d0d0d0" stroke-width="1"/><line x1="52" y1="412.5" x2="55" y2="412.5" stroke="#d0d0d0" stroke-width="1"/><line x1="52" y1="416.5" x2="55" y2="416.5" stroke="#d0d0d0" stroke-width="1"/><line x1="52" y1="420.5" x2="55" y2="420.5" stroke="#d0d0d0" stroke-width="1"/><line x1="52" y1="425.5" x2="55" y2="425.5" stroke="#d0d0d0" stroke-width="1"/><line x1="40" y1="429.5" x2="55" y2="429.5" stroke="#d0d0d0" stroke-width="1"/><text transform="translate(48.6,433.0) rotate(-90)" text-anchor="end" font-size="8.6" fill="#c4c4c4" font-family="Liberation Sans">160</text><line x1="52" y1="433.5" x2="55" y2="433.5" stroke="#d0d0d0" stroke-width="1"/><line x1="52" y1="437.5" x2="55" y2="437.5" stroke="#d0d0d0" stroke-width="1"/><line x1="52" y1="442.5" x2="55" y2="442.5" stroke="#d0d0d0" stroke-width="1"/><line x1="52" y1="446.5" x2="55" y2="446.5" stroke="#d0d0d0" stroke-width="1"/><line x1="50" y1="450.5" x2="55" y2="450.5" stroke="#d0d0d0" stroke-width="1"/><line x1="52" y1="454.5" x2="55" y2="454.5" stroke="#d0d0d0" stroke-width="1"/><line x1="52" y1="459.5" x2="55" y2="459.5" stroke="#d0d0d0" stroke-width="1"/><line x1="52" y1="463.5" x2="55" y2="463.5" stroke="#d0d0d0" stroke-width="1"/><line x1="52" y1="467.5" x2="55" y2="467.5" stroke="#d0d0d0" stroke-width="1"/><line x1="40" y1="472.5" x2="55" y2="472.5" stroke="#d0d0d0" stroke-width="1"/><text transform="translate(48.6,476.0) rotate(-90)" text-anchor="end" font-size="8.6" fill="#c4c4c4" font-family="Liberation Sans">180</text><line x1="52" y1="476.5" x2="55" y2="476.5" stroke="#d0d0d0" stroke-width="1"/><line x1="52" y1="480.5" x2="55" y2="480.5" stroke="#d0d0d0" stroke-width="1"/><line x1="52" y1="484.5" x2="55" y2="484.5" stroke="#d0d0d0" stroke-width="1"/><line x1="52" y1="489.5" x2="55" y2="489.5" stroke="#d0d0d0" stroke-width="1"/><line x1="50" y1="493.5" x2="55" y2="493.5" stroke="#d0d0d0" stroke-width="1"/><line x1="52" y1="497.5" x2="55" y2="497.5" stroke="#d0d0d0" stroke-width="1"/><line x1="52" y1="501.5" x2="55" y2="501.5" stroke="#d0d0d0" stroke-width="1"/><line x1="52" y1="506.5" x2="55" y2="506.5" stroke="#d0d0d0" stroke-width="1"/><line x1="52" y1="510.5" x2="55" y2="510.5" stroke="#d0d0d0" stroke-width="1"/><line x1="40" y1="514.5" x2="55" y2="514.5" stroke="#d0d0d0" stroke-width="1"/><text transform="translate(48.6,518.0) rotate(-90)" text-anchor="end" font-size="8.6" fill="#c4c4c4" font-family="Liberation Sans">200</text><line x1="52" y1="519.5" x2="55" y2="519.5" stroke="#d0d0d0" stroke-width="1"/><line x1="52" y1="523.5" x2="55" y2="523.5" stroke="#d0d0d0" stroke-width="1"/><line x1="52" y1="527.5" x2="55" y2="527.5" stroke="#d0d0d0" stroke-width="1"/><line x1="52" y1="531.5" x2="55" y2="531.5" stroke="#d0d0d0" stroke-width="1"/><line x1="50" y1="536.5" x2="55" y2="536.5" stroke="#d0d0d0" stroke-width="1"/><line x1="52" y1="540.5" x2="55" y2="540.5" stroke="#d0d0d0" stroke-width="1"/><line x1="52" y1="544.5" x2="55" y2="544.5" stroke="#d0d0d0" stroke-width="1"/><line x1="52" y1="548.5" x2="55" y2="548.5" stroke="#d0d0d0" stroke-width="1"/><line x1="52" y1="553.5" x2="55" y2="553.5" stroke="#d0d0d0" stroke-width="1"/><line x1="40" y1="557.5" x2="55" y2="557.5" stroke="#d0d0d0" stroke-width="1"/><text transform="translate(48.6,561.0) rotate(-90)" text-anchor="end" font-size="8.6" fill="#c4c4c4" font-family="Liberation Sans">220</text><line x1="52" y1="561.5" x2="55" y2="561.5" stroke="#d0d0d0" stroke-width="1"/><line x1="52" y1="565.5" x2="55" y2="565.5" stroke="#d0d0d0" stroke-width="1"/><line x1="52" y1="570.5" x2="55" y2="570.5" stroke="#d0d0d0" stroke-width="1"/><line x1="52" y1="574.5" x2="55" y2="574.5" stroke="#d0d0d0" stroke-width="1"/><line x1="50" y1="578.5" x2="55" y2="578.5" stroke="#d0d0d0" stroke-width="1"/><line x1="52" y1="583.5" x2="55" y2="583.5" stroke="#d0d0d0" stroke-width="1"/><line x1="52" y1="587.5" x2="55" y2="587.5" stroke="#d0d0d0" stroke-width="1"/><line x1="52" y1="591.5" x2="55" y2="591.5" stroke="#d0d0d0" stroke-width="1"/><line x1="40" y1="554.5" x2="55" y2="554.5" stroke="#e02020" stroke-width="1"/></svg>
<div class="a" style="left:55px;top:56px;width:687px;height:525px;background:#d7d7d7;"></div>
<div class="a" style="left:742px;top:56px;width:14px;height:525px;background:#2e2e2e;"></div>
<div class="a" style="left:743px;top:56px;width:13px;height:13px;background:#363636;border:1px solid #4a4a4a;"></div>
<svg class="a" style="left:743px;top:56px" width="13" height="13"><polygon points="3,8.5 10,8.5 6.5,4.5" fill="#c8c8c8"/></svg>
<div class="a" style="left:743px;top:70px;width:13px;height:385px;background:#3a3a3a;border:1px solid #4a4a4a;border-radius:1px"></div>
<div class="a" style="left:743px;top:568px;width:13px;height:13px;background:#363636;border:1px solid #4a4a4a;"></div>
<svg class="a" style="left:743px;top:568px" width="13" height="13"><polygon points="3,4.5 10,4.5 6.5,8.5" fill="#c8c8c8"/></svg>
<div class="a" style="left:55px;top:581px;width:687px;height:14px;background:#2e2e2e;"></div>
<div class="a" style="left:55px;top:582px;width:13px;height:13px;background:#363636;border:1px solid #4a4a4a;"></div>
<svg class="a" style="left:55px;top:582px" width="13" height="13"><polygon points="8.5,3 8.5,10 4.5,6.5" fill="#c8c8c8"/></svg>
<div class="a" style="left:75px;top:582px;width:649px;height:13px;background:#3b3b3b;border:1px solid #4e4e4e;border-radius:1px"></div>
<div class="a" style="left:729px;top:582px;width:13px;height:13px;background:#363636;border:1px solid #4a4a4a;"></div>
<svg class="a" style="left:729px;top:582px" width="13" height="13"><polygon points="4.5,3 4.5,10 8.5,6.5" fill="#c8c8c8"/></svg>
<div class="a" style="left:742px;top:581px;width:14px;height:14px;background:#2e2e2e;"></div>
<div class="a" style="left:40px;top:595px;width:716px;height:1px;background:#262626;"></div>
<div class="a" style="left:0px;top:596px;width:1153px;height:29px;background:#333;"></div>
<div class="a t" style="left:6px;top:604.00px;font-size:13px;font-weight:400;color:#e8e8e8;letter-spacing:0.15px">1 item selected</div>
<div class="a t" style="left:577px;top:605.00px;font-size:13px;font-weight:400;color:#e8e8e8;">x: 119.524 mm</div>
<div class="a t" style="left:683px;top:605.00px;font-size:13px;font-weight:400;color:#e8e8e8;letter-spacing:0.2px">y: 218.425 mm</div>
<div class="a t" style="left:789.3px;top:605.00px;font-size:13px;font-weight:400;color:#e8e8e8;">page: 1</div>
<div class="a" style="left:896px;top:600px;width:125px;height:21px;background:#1e1e1e;border:1px solid #3c3c3c;border-radius:3px"></div>
<div class="a t" style="left:898.5px;top:605.00px;font-size:13px;font-weight:400;color:#f0f0f0;">75.3%</div>
<div class="a" style="left:1002px;top:600px;width:19px;height:21px;background:#3a3a3a;border:1px solid #474747;border-radius:0 3px 3px 0"></div>
<svg class="a" style="left:1002px;top:600px" width="19" height="21"><polygon points="5.5,9 13.5,9 9.5,13" fill="#111"/></svg>
<div class="a" style="left:1035px;top:608.5px;width:92px;height:4px;background:#262626;border-radius:2px"></div>
<div class="a" style="left:1030px;top:609.5px;width:6px;height:3px;background:#3d8ee6;border-radius:1px"></div>
<div class="a" style="left:1036px;top:605px;width:11px;height:11px;background:#3a3a3a;border:1px solid #1e1e1e;border-radius:3px"></div>
<div class="a" style="left:1149px;top:613px;width:2px;height:2px;background:#6a6a6a;"></div>
<div class="a" style="left:1149px;top:616px;width:2px;height:2px;background:#6a6a6a;"></div>
<div class="a" style="left:1146px;top:616px;width:2px;height:2px;background:#6a6a6a;"></div>
<div class="a" style="left:1149px;top:619px;width:2px;height:2px;background:#6a6a6a;"></div>
<div class="a" style="left:1146px;top:619px;width:2px;height:2px;background:#6a6a6a;"></div>
<div class="a" style="left:1143px;top:619px;width:2px;height:2px;background:#6a6a6a;"></div>
<div class="a" style="left:1149px;top:622px;width:2px;height:2px;background:#6a6a6a;"></div>
<div class="a" style="left:1146px;top:622px;width:2px;height:2px;background:#6a6a6a;"></div>
<div class="a" style="left:1143px;top:622px;width:2px;height:2px;background:#6a6a6a;"></div>
<div class="a" style="left:1140px;top:622px;width:2px;height:2px;background:#6a6a6a;"></div>
<div class="a" style="left:0px;top:624px;width:1153px;height:1px;background:#4e4e4e;"></div>
<div class="a" style="left:1151px;top:0px;width:1px;height:625px;background:#5a5a5a;"></div>
<div class="a" style="left:1152px;top:0px;width:1px;height:625px;background:#141414;"></div>
<svg class="a" style="left:0;top:619px" width="6" height="6"><path d="M0 0V6H6A6 6 0 0 1 0 0Z" fill="#111"/></svg>
<div class="a" style="left:756px;top:41px;width:397px;height:554px;background:#333;"></div>
<div class="a" style="left:90px;top:97px;width:634px;height:448px;background:#9a9a9a;"></div>
<svg class="a" style="left:81px;top:88px;overflow:hidden" width="634" height="449" viewBox="81 88 634 449">
<rect x="81" y="88" width="634" height="449" fill="#aad3df"/>
<polyline points="205,80 205.1,90.2 208.4,99.2 210.7,117.1 217.4,132.8 217.4,150.7 212.9,164.1 209.6,175.3 210.7,182 219.6,193.2 226.3,204.4 228.6,217.8 229.7,228 230.8,231.5 239.4,243 248,253.1 250.9,260.3 246.6,267.5 249.5,273.3 258.1,277.6 263.9,281.9 268.2,292 275.4,306.4 280,321.7 287.7,328.1 296.6,342.2 305.6,351.2 310.7,360.1 312.2,374.1 319.8,385 316.6,390.7 319.2,397.1 333.9,404.2 347.4,401 360.2,398.4 369.1,399.7 386,410.4 402,416.8 408.4,423.2 403.6,440.8 402,447.2 410,455.2 416.4,464.8 421.2,474.4 431.2,494 442.4,518.6 446.9,534.3 448,545" fill="none" stroke="#b8a8d8" stroke-width="1.5" stroke-linejoin="round"/>
<polygon points="339.7,411.2 348.7,408.7 357,413.8 356.3,420.2 352.5,426 344.8,424 339.1,417.6" fill="none" stroke="#b8a8d8" stroke-width="1.4"/>
<polygon points="357,413.8 367.9,415.1 371,418.9 367.9,424 369.1,431.7 376.8,438.1 384.5,436.8 388.3,429.1 389.6,416.3 387.1,411.2 379.4,408.7 373.6,410" fill="none" stroke="#b8a8d8" stroke-width="1.4"/>
<polygon points="216,70 216.3,90 217.4,101.4 221.9,112.6 225.2,121.6 227.5,137.2 227.5,150.7 226.3,161.9 225.2,177.5 227.5,188.7 230.8,199.9 234.2,213.4 235.1,220 236.5,228.6 243.7,235.8 250.9,243 258.1,251 264.6,256 268.2,259.6 266.8,263.2 265.3,269 267.5,276.2 271.1,283.4 276.9,292 281.9,297.8 285.8,300 284.5,307.7 287.7,315.4 295.4,325.6 303,335.8 309.4,344.8 313.3,351.2 317.1,356.3 318.4,364 319.7,371.6 322.4,376.6 333.3,379.8 344.8,381.1 356.3,387.5 366.6,392.7 376.8,394.6 382,397.1 384,403 389.2,408.8 397.2,412 405.2,418.4 408.4,426.4 410,434.4 413.2,440.8 416.4,447.2 419.6,455.2 422.8,463.2 427.6,471.2 431.6,480 438,498.5 444.6,518.6 451.3,534.3 453,545 730,545 730,70" fill="none" stroke="#b2cce2" stroke-width="6" stroke-linejoin="round"/>
<polygon points="216,70 216.3,90 217.4,101.4 221.9,112.6 225.2,121.6 227.5,137.2 227.5,150.7 226.3,161.9 225.2,177.5 227.5,188.7 230.8,199.9 234.2,213.4 235.1,220 236.5,228.6 243.7,235.8 250.9,243 258.1,251 264.6,256 268.2,259.6 266.8,263.2 265.3,269 267.5,276.2 271.1,283.4 276.9,292 281.9,297.8 285.8,300 284.5,307.7 287.7,315.4 295.4,325.6 303,335.8 309.4,344.8 313.3,351.2 317.1,356.3 318.4,364 319.7,371.6 322.4,376.6 333.3,379.8 344.8,381.1 356.3,387.5 366.6,392.7 376.8,394.6 382,397.1 384,403 389.2,408.8 397.2,412 405.2,418.4 408.4,426.4 410,434.4 413.2,440.8 416.4,447.2 419.6,455.2 422.8,463.2 427.6,471.2 431.6,480 438,498.5 444.6,518.6 451.3,534.3 453,545 730,545 730,70" fill="none" stroke="#aad3df" stroke-width="3.5" stroke-linejoin="round"/>
<polygon points="216,70 216.3,90 217.4,101.4 221.9,112.6 225.2,121.6 227.5,137.2 227.5,150.7 226.3,161.9 225.2,177.5 227.5,188.7 230.8,199.9 234.2,213.4 235.1,220 236.5,228.6 243.7,235.8 250.9,243 258.1,251 264.6,256 268.2,259.6 266.8,263.2 265.3,269 267.5,276.2 271.1,283.4 276.9,292 281.9,297.8 285.8,300 284.5,307.7 287.7,315.4 295.4,325.6 303,335.8 309.4,344.8 313.3,351.2 317.1,356.3 318.4,364 319.7,371.6 322.4,376.6 333.3,379.8 344.8,381.1 356.3,387.5 366.6,392.7 376.8,394.6 382,397.1 384,403 389.2,408.8 397.2,412 405.2,418.4 408.4,426.4 410,434.4 413.2,440.8 416.4,447.2 419.6,455.2 422.8,463.2 427.6,471.2 431.6,480 438,498.5 444.6,518.6 451.3,534.3 453,545 730,545 730,70" fill="#f2efe9"/>
<polygon points="312,292 340,288 366,318 372,360 350,366 322,335" fill="#e9ecdc"/>
<polygon points="446,180 470,176 497,190 497,282 470,285 452,240" fill="#e8ebd8"/>
<polygon points="401,199 430,196 446,215 440,250 412,246" fill="#eaede0"/>
<polygon points="280,180 300,178 318,196 312,212 288,206" fill="#e9ecdc"/>
<polygon points="228,150 236,148 240,160 236,172 230,168" fill="#e3ebd8"/>
<polygon points="226,182 238,176 246,190 244,214 236,228 230,212" fill="#e3ebd8"/>
<polygon points="254,160 262,152 272,158 276,170 264,172" fill="#e6ecdc"/>
<polygon points="292,176 298,178 304,198 306,212 300,214 294,198" fill="#dfe9d3"/>
<polygon points="268,98 276,96 280,110 274,116" fill="#e6ecdc"/>
<polygon points="348,316 356,322 364,342 370,364 362,366 352,340" fill="#dfe9d3"/>
<polygon points="318,318 330,322 338,342 326,346" fill="#e2eAd6"/>
<polygon points="418,214 424,210 428,232 422,244" fill="#dfe9d3"/>
<polygon points="434,224 440,220 444,244 438,256" fill="#dfe9d3"/>
<polygon points="460,190 468,196 472,232 464,252 458,226" fill="#dfe9d3"/>
<polygon points="476,200 484,196 490,236 482,270 476,240" fill="#e2e9cf"/>
<polygon points="476,150 484,146 490,170 484,186" fill="#e6ecdc"/>
<polygon points="684,140 700,132 712,140 715,190 700,186 690,166" fill="#e3ebd8"/>
<polygon points="502,260 512,256 514,280 506,286" fill="#e6ecdc"/>
<polygon points="538,300 548,296 552,322 544,330" fill="#e3ebd8"/>
<polygon points="560,326 574,332 572,346 560,342" fill="#e3ebd8"/>
<polygon points="690,372 702,368 706,380 692,384" fill="#dfe9d2"/>
<polygon points="386,352 402,348 416,360 406,370 390,366" fill="#ebead6"/>
<polygon points="476,466 485,467 496,471.6 507.3,476 516.3,480.6 523,489.5 527.5,498.5 532,512 536.4,525.4 541,537 543,545 496,545 494,530 487.2,516.4 480.4,500.7 477,489.5 474.8,471.6" fill="#aad3df"/>
<polygon points="521,131 526,130.5 531,134 537,146 542,156 544,162 539,164 533,158 527,150 522,142" fill="#aad3df"/>
<polygon points="442,409 446,410 453,420 455,424 452,425 447,418" fill="#aad3df"/>
<polygon points="267.5,260 271,257.5 278,256.5 286,257.5 290,259 286,260 278,259.5 273,261.5 275,268 281,275 285.5,281 283.5,282.5 277,276.5 271.5,268.5" fill="#aad3df"/>
<polygon points="333.5,218 337,217.5 339,224 338,229 334.5,228" fill="#aad3df"/>
<polygon points="345,185 348,184 351,190 350,195 346,192" fill="#aad3df"/>
<polygon points="473.7,444.8 490,447 505,455 505,462 497,470 487,472 478,465 474,455" fill="#eee5c8"/>
<polygon points="325,392 332,391.5 336,393.5 330,394.5" fill="#f2efe9" stroke="#e0c6d8" stroke-width="0.8"/>
<polygon points="339,392.5 348,393 346,395.5 340,395" fill="#f2efe9" stroke="#e0c6d8" stroke-width="0.8"/>
<polygon points="347.4,416.3 351.2,419.5 349,419.8" fill="#f2efe9" stroke="#e0c6d8" stroke-width="0.8"/>
<polygon points="374.3,411.2 382,416.3 380,417.5 374,413.5" fill="#f2efe9" stroke="#e0c6d8" stroke-width="0.8"/>
<polygon points="374.9,426.6 380,431.7 378.5,432.5 374,428" fill="#f2efe9" stroke="#e0c6d8" stroke-width="0.8"/>
<polyline points="222,121.2 577,121.2" fill="none" stroke="#dcc8dc" stroke-width="1.3"/>
<polyline points="416.4,80 416.4,121.2" fill="none" stroke="#dcc8dc" stroke-width="1.3"/>
<polyline points="497,121.2 497,323" fill="none" stroke="#dcc8dc" stroke-width="1.3"/>
<polyline points="577,80 577,157" fill="none" stroke="#dcc8dc" stroke-width="1.3"/>
<polyline points="577,157 730,157" fill="none" stroke="#dcc8dc" stroke-width="1.3"/>
<polyline points="631,157 631,478.4" fill="none" stroke="#dcc8dc" stroke-width="1.3"/>
<polyline points="497,295 730,295" fill="none" stroke="#dcc8dc" stroke-width="1.3"/>
<polyline points="337.2,121.2 337.2,227 481.6,361.6" fill="none" stroke="#dcc8dc" stroke-width="1.3"/>
<polyline points="496.5,323 490,323 479.2,324.4 479.2,342.4 481.6,361.6 493.6,384.4 484,395.2 479.2,414.4 484,430 480.4,443.7 478,455 476,467" fill="none" stroke="#dcc8dc" stroke-width="1.3"/>
<polyline points="403.2,440.7 455.8,437 480.4,443.7 570,477.2 631,478.4 654,478.4 654,465 701.2,465 707,474.6" fill="none" stroke="#dcc8dc" stroke-width="1.3"/>
<polyline points="695.5,457.3 730,457.3" fill="none" stroke="#dcc8dc" stroke-width="1.3"/>
<polyline points="631,478.4 636,485 633,492 640,505 641.7,545" fill="none" stroke="#dcc8dc" stroke-width="1.3"/>
<circle cx="296.4" cy="241.1" r="2.2" fill="#fff" stroke="#777" stroke-width="1"/>
<circle cx="342.2" cy="303.8" r="2.2" fill="#fff" stroke="#777" stroke-width="1"/>
<circle cx="467.7" cy="322.7" r="2.2" fill="#fff" stroke="#777" stroke-width="1"/>
<circle cx="554.7" cy="166.3" r="2.2" fill="#fff" stroke="#777" stroke-width="1"/>
<circle cx="550.2" cy="412.2" r="2.2" fill="#fff" stroke="#777" stroke-width="1"/>
<circle cx="579.6" cy="451.2" r="2.2" fill="#fff" stroke="#777" stroke-width="1"/>
<circle cx="695.5" cy="358.3" r="2.2" fill="#fff" stroke="#777" stroke-width="1"/>
<circle cx="417.8" cy="441.9" r="2.2" fill="#fff" stroke="#777" stroke-width="1"/>
<circle cx="701.2" cy="467" r="2.2" fill="#fff" stroke="#777" stroke-width="1"/>
<circle cx="286" cy="283" r="2.2" fill="#fff" stroke="#777" stroke-width="1"/>
<text x="260.4" y="236.8" font-size="12.5" textLength="72.5" lengthAdjust="spacingAndGlyphs" fill="#fff" stroke="#fafafa" stroke-opacity="0.85" stroke-width="2.6" stroke-linejoin="round" font-family="Liberation Sans">Sacramento</text>
<text x="260.4" y="236.8" font-size="12.5" textLength="72.5" lengthAdjust="spacingAndGlyphs" fill="#505050" stroke="#505050" stroke-width="0.3" font-family="Liberation Sans">Sacramento</text>
<text x="230.4" y="290" font-size="12.5" textLength="51" lengthAdjust="spacingAndGlyphs" fill="#fff" stroke="#fafafa" stroke-opacity="0.85" stroke-width="2.6" stroke-linejoin="round" font-family="Liberation Sans">San Jose</text>
<text x="230.4" y="290" font-size="12.5" textLength="51" lengthAdjust="spacingAndGlyphs" fill="#505050" stroke="#505050" stroke-width="0.3" font-family="Liberation Sans">San Jose</text>
<text x="322.8" y="318.4" font-size="12.5" textLength="41" lengthAdjust="spacingAndGlyphs" fill="#fff" stroke="#fafafa" stroke-opacity="0.85" stroke-width="2.6" stroke-linejoin="round" font-family="Liberation Sans">Fresno</text>
<text x="322.8" y="318.4" font-size="12.5" textLength="41" lengthAdjust="spacingAndGlyphs" fill="#505050" stroke="#505050" stroke-width="0.3" font-family="Liberation Sans">Fresno</text>
<text x="437.3" y="337.5" font-size="12.5" textLength="60" lengthAdjust="spacingAndGlyphs" fill="#fff" stroke="#fafafa" stroke-opacity="0.85" stroke-width="2.6" stroke-linejoin="round" font-family="Liberation Sans">Las Vegas</text>
<text x="437.3" y="337.5" font-size="12.5" textLength="60" lengthAdjust="spacingAndGlyphs" fill="#505050" stroke="#505050" stroke-width="0.3" font-family="Liberation Sans">Las Vegas</text>
<text x="527.8" y="144" font-size="12.5" textLength="53.8" lengthAdjust="spacingAndGlyphs" fill="#fff" stroke="#fafafa" stroke-opacity="0.85" stroke-width="2.6" stroke-linejoin="round" font-family="Liberation Sans">Salt Lake</text>
<text x="527.8" y="144" font-size="12.5" textLength="53.8" lengthAdjust="spacingAndGlyphs" fill="#505050" stroke="#505050" stroke-width="0.3" font-family="Liberation Sans">Salt Lake</text>
<text x="543.5" y="160" font-size="12.5" textLength="22.5" lengthAdjust="spacingAndGlyphs" fill="#fff" stroke="#fafafa" stroke-opacity="0.85" stroke-width="2.6" stroke-linejoin="round" font-family="Liberation Sans">City</text>
<text x="543.5" y="160" font-size="12.5" textLength="22.5" lengthAdjust="spacingAndGlyphs" fill="#505050" stroke="#505050" stroke-width="0.3" font-family="Liberation Sans">City</text>
<text x="525.5" y="425.5" font-size="12.5" textLength="49.2" lengthAdjust="spacingAndGlyphs" fill="#fff" stroke="#fafafa" stroke-opacity="0.85" stroke-width="2.6" stroke-linejoin="round" font-family="Liberation Sans">Phoenix</text>
<text x="525.5" y="425.5" font-size="12.5" textLength="49.2" lengthAdjust="spacingAndGlyphs" fill="#505050" stroke="#505050" stroke-width="0.3" font-family="Liberation Sans">Phoenix</text>
<text x="557" y="445.8" font-size="12.5" textLength="44" lengthAdjust="spacingAndGlyphs" fill="#fff" stroke="#fafafa" stroke-opacity="0.85" stroke-width="2.6" stroke-linejoin="round" font-family="Liberation Sans">Tucson</text>
<text x="557" y="445.8" font-size="12.5" textLength="44" lengthAdjust="spacingAndGlyphs" fill="#505050" stroke="#505050" stroke-width="0.3" font-family="Liberation Sans">Tucson</text>
<text x="656" y="353" font-size="12.5" textLength="76" lengthAdjust="spacingAndGlyphs" fill="#fff" stroke="#fafafa" stroke-opacity="0.85" stroke-width="2.6" stroke-linejoin="round" font-family="Liberation Sans">Albuquerque</text>
<text x="656" y="353" font-size="12.5" textLength="76" lengthAdjust="spacingAndGlyphs" fill="#505050" stroke="#505050" stroke-width="0.3" font-family="Liberation Sans">Albuquerque</text>
<text x="348" y="407.6" font-size="12.5" textLength="72" lengthAdjust="spacingAndGlyphs" fill="#fff" stroke="#fafafa" stroke-opacity="0.85" stroke-width="2.6" stroke-linejoin="round" font-family="Liberation Sans">Los Angeles</text>
<text x="348" y="407.6" font-size="12.5" textLength="72" lengthAdjust="spacingAndGlyphs" fill="#505050" stroke="#505050" stroke-width="0.3" font-family="Liberation Sans">Los Angeles</text>
<text x="397.2" y="437.6" font-size="12.5" textLength="42.8" lengthAdjust="spacingAndGlyphs" fill="#fff" stroke="#fafafa" stroke-opacity="0.85" stroke-width="2.6" stroke-linejoin="round" font-family="Liberation Sans">Tijuana</text>
<text x="397.2" y="437.6" font-size="12.5" textLength="42.8" lengthAdjust="spacingAndGlyphs" fill="#505050" stroke="#505050" stroke-width="0.3" font-family="Liberation Sans">Tijuana</text>
<text x="464.8" y="442.5" font-size="12.5" textLength="48.1" lengthAdjust="spacingAndGlyphs" fill="#fff" stroke="#fafafa" stroke-opacity="0.85" stroke-width="2.6" stroke-linejoin="round" font-family="Liberation Sans">Mexicali</text>
<text x="464.8" y="442.5" font-size="12.5" textLength="48.1" lengthAdjust="spacingAndGlyphs" fill="#505050" stroke="#505050" stroke-width="0.3" font-family="Liberation Sans">Mexicali</text>
<text x="659" y="483" font-size="12.5" textLength="86" lengthAdjust="spacingAndGlyphs" fill="#fff" stroke="#fafafa" stroke-opacity="0.85" stroke-width="2.6" stroke-linejoin="round" font-family="Liberation Sans">Ciudad Juárez</text>
<text x="659" y="483" font-size="12.5" textLength="86" lengthAdjust="spacingAndGlyphs" fill="#505050" stroke="#505050" stroke-width="0.3" font-family="Liberation Sans">Ciudad Juárez</text>
<text x="307.2" y="286.7" font-size="11.5" font-style="italic" textLength="51" lengthAdjust="spacingAndGlyphs" fill="#f6f3ee" stroke="#f6f3ee" stroke-width="2" stroke-linejoin="round" font-family="Liberation Sans">California</text>
<text x="307.2" y="286.7" font-size="11.5" font-style="italic" textLength="51" lengthAdjust="spacingAndGlyphs" fill="#9d78ad" stroke="#9d78ad" stroke-width="0.25" font-family="Liberation Sans">California</text>
<text x="405" y="245" font-size="11.5" font-style="italic" textLength="39" lengthAdjust="spacingAndGlyphs" fill="#f6f3ee" stroke="#f6f3ee" stroke-width="2" stroke-linejoin="round" font-family="Liberation Sans">Nevada</text>
<text x="405" y="245" font-size="11.5" font-style="italic" textLength="39" lengthAdjust="spacingAndGlyphs" fill="#9d78ad" stroke="#9d78ad" stroke-width="0.25" font-family="Liberation Sans">Nevada</text>
<text x="551.6" y="212.5" font-size="11.5" font-style="italic" textLength="24" lengthAdjust="spacingAndGlyphs" fill="#f6f3ee" stroke="#f6f3ee" stroke-width="2" stroke-linejoin="round" font-family="Liberation Sans">Utah</text>
<text x="551.6" y="212.5" font-size="11.5" font-style="italic" textLength="24" lengthAdjust="spacingAndGlyphs" fill="#9d78ad" stroke="#9d78ad" stroke-width="0.25" font-family="Liberation Sans">Utah</text>
<text x="701" y="230.4" font-size="11.5" font-style="italic" textLength="52" lengthAdjust="spacingAndGlyphs" fill="#f6f3ee" stroke="#f6f3ee" stroke-width="2" stroke-linejoin="round" font-family="Liberation Sans">Colorado</text>
<text x="701" y="230.4" font-size="11.5" font-style="italic" textLength="52" lengthAdjust="spacingAndGlyphs" fill="#9d78ad" stroke="#9d78ad" stroke-width="0.25" font-family="Liberation Sans">Colorado</text>
<text x="541.6" y="391" font-size="11.5" font-style="italic" textLength="40.4" lengthAdjust="spacingAndGlyphs" fill="#f6f3ee" stroke="#f6f3ee" stroke-width="2" stroke-linejoin="round" font-family="Liberation Sans">Arizona</text>
<text x="541.6" y="391" font-size="11.5" font-style="italic" textLength="40.4" lengthAdjust="spacingAndGlyphs" fill="#9d78ad" stroke="#9d78ad" stroke-width="0.25" font-family="Liberation Sans">Arizona</text>
<text x="681" y="391" font-size="11.5" font-style="italic" textLength="64" lengthAdjust="spacingAndGlyphs" fill="#f6f3ee" stroke="#f6f3ee" stroke-width="2" stroke-linejoin="round" font-family="Liberation Sans">New Mexico</text>
<text x="681" y="391" font-size="11.5" font-style="italic" textLength="64" lengthAdjust="spacingAndGlyphs" fill="#9d78ad" stroke="#9d78ad" stroke-width="0.25" font-family="Liberation Sans">New Mexico</text>
<text x="425" y="514.2" font-size="11.5" font-style="italic" textLength="77.8" lengthAdjust="spacingAndGlyphs" fill="#f6f3ee" stroke="#f6f3ee" stroke-width="2" stroke-linejoin="round" font-family="Liberation Sans">Baja California</text>
<text x="425" y="514.2" font-size="11.5" font-style="italic" textLength="77.8" lengthAdjust="spacingAndGlyphs" fill="#9d78ad" stroke="#9d78ad" stroke-width="0.25" font-family="Liberation Sans">Baja California</text>
<circle cx="176.4" cy="145.8" r="2.1" fill="#9c5530" stroke="#2f241e" stroke-width="1"/>
<circle cx="188.9" cy="156.5" r="2.1" fill="#9c5530" stroke="#2f241e" stroke-width="1"/>
<circle cx="184" cy="177.8" r="2.1" fill="#9c5530" stroke="#2f241e" stroke-width="1"/>
<circle cx="195.3" cy="174.5" r="2.1" fill="#9c5530" stroke="#2f241e" stroke-width="1"/>
<circle cx="210.4" cy="169.1" r="2.1" fill="#9c5530" stroke="#2f241e" stroke-width="1"/>
<circle cx="215.6" cy="156.5" r="2.1" fill="#9c5530" stroke="#2f241e" stroke-width="1"/>
<circle cx="222.2" cy="152.5" r="2.1" fill="#9c5530" stroke="#2f241e" stroke-width="1"/>
<circle cx="215.6" cy="163.7" r="2.1" fill="#9c5530" stroke="#2f241e" stroke-width="1"/>
<circle cx="220.7" cy="165.8" r="2.1" fill="#9c5530" stroke="#2f241e" stroke-width="1"/>
<circle cx="224.3" cy="165.3" r="2.1" fill="#9c5530" stroke="#2f241e" stroke-width="1"/>
<circle cx="220.7" cy="178.8" r="2.1" fill="#9c5530" stroke="#2f241e" stroke-width="1"/>
<circle cx="224" cy="177.8" r="2.1" fill="#9c5530" stroke="#2f241e" stroke-width="1"/>
<circle cx="219.6" cy="183.7" r="2.1" fill="#9c5530" stroke="#2f241e" stroke-width="1"/>
<circle cx="228.9" cy="120.7" r="2.1" fill="#9c5530" stroke="#2f241e" stroke-width="1"/>
<circle cx="228.9" cy="226.7" r="2.1" fill="#9c5530" stroke="#2f241e" stroke-width="1"/>
<circle cx="282.5" cy="109.5" r="2.1" fill="#9c5530" stroke="#2f241e" stroke-width="1"/>
<circle cx="282.5" cy="191.8" r="2.1" fill="#9c5530" stroke="#2f241e" stroke-width="1"/>
<circle cx="295.4" cy="211.5" r="2.1" fill="#9c5530" stroke="#2f241e" stroke-width="1"/>
<circle cx="264" cy="245" r="2.1" fill="#9c5530" stroke="#2f241e" stroke-width="1"/>
<circle cx="269.3" cy="243.3" r="2.1" fill="#9c5530" stroke="#2f241e" stroke-width="1"/>
<circle cx="271.7" cy="248.1" r="2.1" fill="#9c5530" stroke="#2f241e" stroke-width="1"/>
<circle cx="271.9" cy="254.1" r="2.1" fill="#9c5530" stroke="#2f241e" stroke-width="1"/>
<circle cx="274.3" cy="253.6" r="2.1" fill="#9c5530" stroke="#2f241e" stroke-width="1"/>
<circle cx="285.6" cy="243.8" r="2.1" fill="#9c5530" stroke="#2f241e" stroke-width="1"/>
<circle cx="283" cy="260.8" r="2.1" fill="#9c5530" stroke="#2f241e" stroke-width="1"/>
<circle cx="287.5" cy="265.6" r="2.1" fill="#9c5530" stroke="#2f241e" stroke-width="1"/>
<circle cx="271.9" cy="267.5" r="2.1" fill="#9c5530" stroke="#2f241e" stroke-width="1"/>
<circle cx="277.7" cy="267.5" r="2.1" fill="#9c5530" stroke="#2f241e" stroke-width="1"/>
<circle cx="280.3" cy="271.1" r="2.1" fill="#9c5530" stroke="#2f241e" stroke-width="1"/>
<circle cx="269.5" cy="272" r="2.1" fill="#9c5530" stroke="#2f241e" stroke-width="1"/>
<circle cx="274.3" cy="274.5" r="2.1" fill="#9c5530" stroke="#2f241e" stroke-width="1"/>
<circle cx="271.9" cy="274.7" r="2.1" fill="#9c5530" stroke="#2f241e" stroke-width="1"/>
<circle cx="274.8" cy="277.6" r="2.1" fill="#9c5530" stroke="#2f241e" stroke-width="1"/>
<circle cx="282.7" cy="277.6" r="2.1" fill="#9c5530" stroke="#2f241e" stroke-width="1"/>
<circle cx="288.7" cy="280" r="2.1" fill="#9c5530" stroke="#2f241e" stroke-width="1"/>
<circle cx="291.1" cy="283.8" r="2.1" fill="#9c5530" stroke="#2f241e" stroke-width="1"/>
<circle cx="285.8" cy="288.2" r="2.1" fill="#9c5530" stroke="#2f241e" stroke-width="1"/>
<circle cx="285.8" cy="293.2" r="2.1" fill="#9c5530" stroke="#2f241e" stroke-width="1"/>
<circle cx="327.8" cy="320.8" r="2.1" fill="#9c5530" stroke="#2f241e" stroke-width="1"/>
<circle cx="323" cy="328.2" r="2.1" fill="#9c5530" stroke="#2f241e" stroke-width="1"/>
<circle cx="326.6" cy="334.2" r="2.1" fill="#9c5530" stroke="#2f241e" stroke-width="1"/>
<circle cx="307" cy="337.8" r="2.1" fill="#9c5530" stroke="#2f241e" stroke-width="1"/>
<circle cx="309.4" cy="344.3" r="2.1" fill="#9c5530" stroke="#2f241e" stroke-width="1"/>
<circle cx="315.6" cy="366.9" r="2.1" fill="#9c5530" stroke="#2f241e" stroke-width="1"/>
<circle cx="338.2" cy="208.6" r="2.1" fill="#9c5530" stroke="#2f241e" stroke-width="1"/>
<circle cx="376.6" cy="205.7" r="2.1" fill="#9c5530" stroke="#2f241e" stroke-width="1"/>
<circle cx="376.6" cy="212.9" r="2.1" fill="#9c5530" stroke="#2f241e" stroke-width="1"/>
<circle cx="384.7" cy="216.5" r="2.1" fill="#9c5530" stroke="#2f241e" stroke-width="1"/>
<circle cx="403.4" cy="174.3" r="2.1" fill="#9c5530" stroke="#2f241e" stroke-width="1"/>
<circle cx="474" cy="151.2" r="2.1" fill="#9c5530" stroke="#2f241e" stroke-width="1"/>
<circle cx="535.9" cy="118.4" r="2.1" fill="#9c5530" stroke="#2f241e" stroke-width="1"/>
<circle cx="556" cy="127.8" r="2.1" fill="#9c5530" stroke="#2f241e" stroke-width="1"/>
<circle cx="578.5" cy="92.9" r="2.1" fill="#9c5530" stroke="#2f241e" stroke-width="1"/>
<circle cx="571.8" cy="210.2" r="2.1" fill="#9c5530" stroke="#2f241e" stroke-width="1"/>
<circle cx="671.7" cy="228.2" r="2.1" fill="#9c5530" stroke="#2f241e" stroke-width="1"/>
<circle cx="395.3" cy="237.2" r="2.1" fill="#9c5530" stroke="#2f241e" stroke-width="1"/>
<circle cx="367.4" cy="274.4" r="2.1" fill="#9c5530" stroke="#2f241e" stroke-width="1"/>
<circle cx="378" cy="276.6" r="2.1" fill="#9c5530" stroke="#2f241e" stroke-width="1"/>
<circle cx="387.4" cy="304.9" r="2.1" fill="#9c5530" stroke="#2f241e" stroke-width="1"/>
<circle cx="435.8" cy="304.6" r="2.1" fill="#9c5530" stroke="#2f241e" stroke-width="1"/>
<circle cx="365.5" cy="350.2" r="2.1" fill="#9c5530" stroke="#2f241e" stroke-width="1"/>
<circle cx="363.1" cy="361" r="2.1" fill="#9c5530" stroke="#2f241e" stroke-width="1"/>
<circle cx="427.4" cy="361" r="2.1" fill="#9c5530" stroke="#2f241e" stroke-width="1"/>
<circle cx="436.3" cy="374.2" r="2.1" fill="#9c5530" stroke="#2f241e" stroke-width="1"/>
<circle cx="322.8" cy="377.3" r="2.1" fill="#9c5530" stroke="#2f241e" stroke-width="1"/>
<circle cx="331.1" cy="380.1" r="2.1" fill="#9c5530" stroke="#2f241e" stroke-width="1"/>
<circle cx="344.3" cy="380.1" r="2.1" fill="#9c5530" stroke="#2f241e" stroke-width="1"/>
<circle cx="344.3" cy="382.4" r="2.1" fill="#9c5530" stroke="#2f241e" stroke-width="1"/>
<circle cx="339.2" cy="387.1" r="2.1" fill="#9c5530" stroke="#2f241e" stroke-width="1"/>
<circle cx="363.1" cy="390.3" r="2.1" fill="#9c5530" stroke="#2f241e" stroke-width="1"/>
<circle cx="372.7" cy="392.6" r="2.1" fill="#9c5530" stroke="#2f241e" stroke-width="1"/>
<circle cx="379.1" cy="380.1" r="2.1" fill="#9c5530" stroke="#2f241e" stroke-width="1"/>
<circle cx="375.3" cy="386.6" r="2.1" fill="#9c5530" stroke="#2f241e" stroke-width="1"/>
<circle cx="378.5" cy="386.2" r="2.1" fill="#9c5530" stroke="#2f241e" stroke-width="1"/>
<circle cx="379.5" cy="391.6" r="2.1" fill="#9c5530" stroke="#2f241e" stroke-width="1"/>
<circle cx="390" cy="385.2" r="2.1" fill="#9c5530" stroke="#2f241e" stroke-width="1"/>
<circle cx="386.8" cy="390.5" r="2.1" fill="#9c5530" stroke="#2f241e" stroke-width="1"/>
<circle cx="387.8" cy="391.8" r="2.1" fill="#9c5530" stroke="#2f241e" stroke-width="1"/>
<circle cx="390" cy="393.9" r="2.1" fill="#9c5530" stroke="#2f241e" stroke-width="1"/>
<circle cx="396.4" cy="394.8" r="2.1" fill="#9c5530" stroke="#2f241e" stroke-width="1"/>
<circle cx="394.5" cy="398" r="2.1" fill="#9c5530" stroke="#2f241e" stroke-width="1"/>
<circle cx="399.4" cy="381.5" r="2.1" fill="#9c5530" stroke="#2f241e" stroke-width="1"/>
<circle cx="398.1" cy="389.2" r="2.1" fill="#9c5530" stroke="#2f241e" stroke-width="1"/>
<circle cx="408.3" cy="390.5" r="2.1" fill="#9c5530" stroke="#2f241e" stroke-width="1"/>
<circle cx="384.3" cy="400.3" r="2.1" fill="#9c5530" stroke="#2f241e" stroke-width="1"/>
<circle cx="383" cy="402.3" r="2.1" fill="#9c5530" stroke="#2f241e" stroke-width="1"/>
<circle cx="390.9" cy="405.7" r="2.1" fill="#9c5530" stroke="#2f241e" stroke-width="1"/>
<circle cx="384.5" cy="409.6" r="2.1" fill="#9c5530" stroke="#2f241e" stroke-width="1"/>
<circle cx="393.5" cy="426.6" r="2.1" fill="#9c5530" stroke="#2f241e" stroke-width="1"/>
<circle cx="421.2" cy="383.1" r="2.1" fill="#9c5530" stroke="#2f241e" stroke-width="1"/>
<circle cx="421.7" cy="387.2" r="2.1" fill="#9c5530" stroke="#2f241e" stroke-width="1"/>
<circle cx="431.7" cy="387.2" r="2.1" fill="#9c5530" stroke="#2f241e" stroke-width="1"/>
<circle cx="427.4" cy="393.7" r="2.1" fill="#9c5530" stroke="#2f241e" stroke-width="1"/>
<circle cx="435.4" cy="394.6" r="2.1" fill="#9c5530" stroke="#2f241e" stroke-width="1"/>
<circle cx="416.9" cy="403.3" r="2.1" fill="#9c5530" stroke="#2f241e" stroke-width="1"/>
<circle cx="416.9" cy="409.8" r="2.1" fill="#9c5530" stroke="#2f241e" stroke-width="1"/>
<circle cx="411.4" cy="435.4" r="2.1" fill="#9c5530" stroke="#2f241e" stroke-width="1"/>
<circle cx="445.9" cy="435.4" r="2.1" fill="#9c5530" stroke="#2f241e" stroke-width="1"/>
<circle cx="430.3" cy="473.6" r="2.1" fill="#9c5530" stroke="#2f241e" stroke-width="1"/>
<circle cx="449.1" cy="423" r="2.1" fill="#9c5530" stroke="#2f241e" stroke-width="1"/>
<circle cx="453.1" cy="421.5" r="2.1" fill="#9c5530" stroke="#2f241e" stroke-width="1"/>
<circle cx="457.2" cy="432" r="2.1" fill="#9c5530" stroke="#2f241e" stroke-width="1"/>
<circle cx="457.2" cy="434.7" r="2.1" fill="#9c5530" stroke="#2f241e" stroke-width="1"/>
<circle cx="461.6" cy="437.2" r="2.1" fill="#9c5530" stroke="#2f241e" stroke-width="1"/>
<circle cx="457.2" cy="441.6" r="2.1" fill="#9c5530" stroke="#2f241e" stroke-width="1"/>
<circle cx="461.9" cy="443.2" r="2.1" fill="#9c5530" stroke="#2f241e" stroke-width="1"/>
<circle cx="466.1" cy="443.7" r="2.1" fill="#9c5530" stroke="#2f241e" stroke-width="1"/>
<circle cx="461" cy="447" r="2.1" fill="#9c5530" stroke="#2f241e" stroke-width="1"/>
<circle cx="463.2" cy="448.1" r="2.1" fill="#9c5530" stroke="#2f241e" stroke-width="1"/>
<circle cx="471" cy="450.6" r="2.1" fill="#9c5530" stroke="#2f241e" stroke-width="1"/>
<circle cx="457.2" cy="464" r="2.1" fill="#9c5530" stroke="#2f241e" stroke-width="1"/>
<circle cx="631.4" cy="488.8" r="2.1" fill="#9c5530" stroke="#2f241e" stroke-width="1"/>
<rect x="81.5" y="88.5" width="10" height="10" fill="#fff" stroke="#2e86c8" stroke-width="1"/>
<rect x="81.5" y="307.5" width="10" height="10" fill="#fff" stroke="#2e86c8" stroke-width="1"/>
<rect x="81.5" y="526.5" width="10" height="10" fill="#fff" stroke="#2e86c8" stroke-width="1"/>
<rect x="393.0" y="88.5" width="10" height="10" fill="#fff" stroke="#2e86c8" stroke-width="1"/>
<rect x="393.0" y="526.5" width="10" height="10" fill="#fff" stroke="#2e86c8" stroke-width="1"/>
<rect x="704.5" y="88.5" width="10" height="10" fill="#fff" stroke="#2e86c8" stroke-width="1"/>
<rect x="704.5" y="307.5" width="10" height="10" fill="#fff" stroke="#2e86c8" stroke-width="1"/>
<rect x="704.5" y="526.5" width="10" height="10" fill="#fff" stroke="#2e86c8" stroke-width="1"/>
<rect x="81.5" y="88.5" width="633" height="448" fill="none" stroke="#3aa0d8" stroke-width="1"/>
<rect x="81.5" y="88.5" width="633" height="448" fill="none" stroke="#6a0030" stroke-width="1" stroke-dasharray="4 2" stroke-dashoffset="1"/>
</svg>
<div class="a" style="left:763px;top:68px;width:390px;height:1px;background:#474747;"></div>
<div class="a" style="left:821px;top:44px;width:102px;height:25px;background:#2d2d2d;border:1px solid #454545;border-bottom:none;border-radius:4px 4px 0 0"></div>
<div class="a" style="left:763px;top:42px;width:57px;height:27px;background:#343434;border:1px solid #4a4a4a;border-bottom:none;border-radius:4px 4px 0 0"></div>
<div class="a t" style="left:775px;top:49.00px;font-size:13px;font-weight:400;color:#ececec;">Items</div>
<div class="a t" style="left:832.5px;top:49.50px;font-size:13px;font-weight:400;color:#e4e4e4;letter-spacing:0.25px">Undo History</div>
<div class="a t" style="left:766.4px;top:73.27px;font-size:11.5px;font-weight:400;color:#e0e0e0;">Items</div>
<svg class="a" style="left:1125px;top:72px" width="28" height="12"><rect x="0.5" y="0.5" width="11" height="11" rx="2" fill="none" stroke="#9a9a9a" stroke-width="0.8"/><rect x="2.5" y="4.5" width="5" height="5" fill="none" stroke="#9a9a9a" stroke-width="0.8"/><path d="M4.5 4.5V2.5H9.5V7.5H7.5" fill="none" stroke="#9a9a9a" stroke-width="0.8"/>
<rect x="14.5" y="0.5" width="11" height="11" rx="2" fill="none" stroke="#9a9a9a" stroke-width="0.8"/><path d="M16.5 2.5L23.5 9.5M23.5 2.5L16.5 9.5" stroke="#9a9a9a" stroke-width="0.9"/></svg>
<svg class="a" style="left:1125px;top:252px" width="28" height="12"><rect x="0.5" y="0.5" width="11" height="11" rx="2" fill="none" stroke="#9a9a9a" stroke-width="0.8"/><rect x="2.5" y="4.5" width="5" height="5" fill="none" stroke="#9a9a9a" stroke-width="0.8"/><path d="M4.5 4.5V2.5H9.5V7.5H7.5" fill="none" stroke="#9a9a9a" stroke-width="0.8"/>
<rect x="14.5" y="0.5" width="11" height="11" rx="2" fill="none" stroke="#9a9a9a" stroke-width="0.8"/><path d="M16.5 2.5L23.5 9.5M23.5 2.5L16.5 9.5" stroke="#9a9a9a" stroke-width="0.9"/></svg>
<div class="a" style="left:763px;top:89px;width:390px;height:124px;background:#1e1e1e;"></div>
<div class="a" style="left:763px;top:89px;width:390px;height:19px;background:#3b3b3b;"></div>
<div class="a" style="left:788px;top:89px;width:1px;height:19px;background:#4e4e4e;"></div>
<div class="a" style="left:815px;top:89px;width:1px;height:19px;background:#4e4e4e;"></div>
<svg class="a" style="left:765px;top:93px" width="17" height="12"><path d="M1 6C4 1.5 12 1.5 15.5 6C12 10.5 4 10.5 1 6Z" fill="#d8d8d8" stroke="#888" stroke-width="0.6"/><circle cx="8.2" cy="6" r="3" fill="#888"/><circle cx="8.2" cy="6" r="1.5" fill="#111"/><path d="M2 3C6 0 11 0 15 2.5" fill="none" stroke="#888" stroke-width="0.6"/></svg>
<svg class="a" style="left:793px;top:92px" width="14" height="16"><path d="M3.5 7V5A3.5 3.5 0 0 1 10.5 5V7" fill="none" stroke="#777" stroke-width="1.8"/><rect x="2" y="7" width="10" height="7.5" rx="1.5" fill="#6e6e6e"/></svg>
<div class="a t" style="left:819.5px;top:93.00px;font-size:13px;font-weight:400;color:#ececec;">Item</div>
<div class="a" style="left:767px;top:111px;width:13px;height:13px;background:#1e1e1e;border:1px solid #2c2c2c"></div>
<svg class="a" style="left:767px;top:111px" width="13" height="13"><path d="M3 6.5L5.5 10L10 2.5" fill="none" stroke="#f0f0f0" stroke-width="1.3"/></svg>
<div class="a" style="left:793px;top:111px;width:13px;height:13px;background:#1e1e1e;border:1px solid #2c2c2c"></div>
<svg class="a" style="left:821px;top:111px" width="15" height="14"><defs><linearGradient id="mapi" x1="0" x2="1"><stop offset="0" stop-color="#8a8a8a"/><stop offset="0.3" stop-color="#eee"/><stop offset="1" stop-color="#d0d0d0"/></linearGradient></defs><path d="M2.5 0.5H14V13H2.5C1.5 13 0.5 12.5 0.5 11.5V2C0.5 1 1.5 0.5 2.5 0.5Z" fill="url(#mapi)"/></svg>
<div class="a t" style="left:842.7px;top:111.42px;font-size:12.5px;font-weight:700;color:#f4f4f4;">Map 1</div>
<div class="a" style="left:950px;top:216px;width:2px;height:2px;background:#777;"></div>
<div class="a" style="left:953px;top:216px;width:2px;height:2px;background:#777;"></div>
<div class="a" style="left:956px;top:216px;width:2px;height:2px;background:#777;"></div>
<div class="a" style="left:959px;top:216px;width:2px;height:2px;background:#777;"></div>
<div class="a" style="left:962px;top:216px;width:2px;height:2px;background:#777;"></div>
<div class="a" style="left:965px;top:216px;width:2px;height:2px;background:#777;"></div>
<div class="a" style="left:763px;top:246px;width:390px;height:1px;background:#474747;"></div>
<div class="a" style="left:828px;top:223px;width:115px;height:24px;background:#2d2d2d;border:1px solid #454545;border-bottom:none;border-radius:4px 4px 0 0"></div>
<div class="a" style="left:944px;top:223px;width:64px;height:24px;background:#2d2d2d;border:1px solid #454545;border-bottom:none;border-radius:4px 4px 0 0"></div>
<div class="a" style="left:763px;top:221px;width:64px;height:26px;background:#343434;border:1px solid #4a4a4a;border-bottom:none;border-radius:4px 4px 0 0"></div>
<div class="a t" style="left:774.5px;top:229.00px;font-size:13px;font-weight:400;color:#ececec;">Layout</div>
<div class="a t" style="left:839.5px;top:229.40px;font-size:13px;font-weight:400;color:#e4e4e4;letter-spacing:0.2px">Item Properties</div>
<div class="a t" style="left:955px;top:229.40px;font-size:13px;font-weight:400;color:#e4e4e4;">Guides</div>
<div class="a t" style="left:766.2px;top:252.27px;font-size:11.5px;font-weight:400;color:#e0e0e0;">Layout</div>
<div class="a" style="left:759px;top:312px;width:2px;height:2px;background:#777;"></div>
<div class="a" style="left:759px;top:315px;width:2px;height:2px;background:#777;"></div>
<div class="a" style="left:759px;top:318px;width:2px;height:2px;background:#777;"></div>
<div class="a" style="left:759px;top:321px;width:2px;height:2px;background:#777;"></div>
<div class="a" style="left:759px;top:324px;width:2px;height:2px;background:#777;"></div>
<div class="a" style="left:759px;top:327px;width:2px;height:2px;background:#777;"></div>
<div class="a" style="left:1139px;top:267px;width:13px;height:328px;background:#2e2e2e;"></div>
<div class="a" style="left:1139px;top:267px;width:13px;height:13px;background:#363636;border:1px solid #4a4a4a"></div>
<svg class="a" style="left:1139px;top:267px" width="13" height="13"><polygon points="3,8.5 10,8.5 6.5,4.5" fill="#c8c8c8"/></svg>
<div class="a" style="left:1139px;top:280px;width:13px;height:97px;background:#3a3a3a;border:1px solid #4a4a4a;border-radius:1px"></div>
<div class="a" style="left:1139px;top:583px;width:13px;height:12px;background:#363636;border:1px solid #4a4a4a"></div>
<svg class="a" style="left:1139px;top:583px" width="13" height="12"><polygon points="3,4 10,4 6.5,8" fill="#c8c8c8"/></svg>
<svg class="a" style="left:775px;top:282px" width="12" height="10"><polygon points="1,1.5 11,1.5 6,7.5" fill="none" stroke="#cfcfcf" stroke-width="1"/></svg>
<div class="a t" style="left:795px;top:280.00px;font-size:13px;font-weight:700;color:#f0f0f0;letter-spacing:0.15px">General Settings</div>
<div class="a" style="left:774px;top:298px;width:353px;height:51px;background:transparent;border:1px solid #3f3f3f;border-radius:4px"></div>
<div class="a t" style="left:787.4px;top:317.00px;font-size:13px;font-weight:400;color:#ececec;">Reference map</div>
<div class="a" style="left:885px;top:312px;width:227px;height:22px;background:linear-gradient(#444,#3b3b3b);border:1px solid #565656;border-radius:3px"></div><svg class="a" style="left:891px;top:315px" width="14" height="14"><defs><linearGradient id="mi885312" x1="0" x2="1"><stop offset="0" stop-color="#9a9a9a"/><stop offset="0.3" stop-color="#eee"/><stop offset="1" stop-color="#d0d0d0"/></linearGradient></defs><path d="M2.5 1H13V13H2.5C1.5 13 1 12.2 1 11.5V2.5C1 1.8 1.5 1 2.5 1Z" fill="url(#mi885312)"/></svg><div class="a t" style="left:909px;top:317.00px;font-size:13px;font-weight:400;color:#000;-webkit-text-stroke:0.3px #000">Map 1</div><svg class="a" style="left:1096px;top:312px" width="12" height="22"><polygon points="1.5,9.0 9.5,9.0 5.5,13.0" fill="#111"/></svg>
<svg class="a" style="left:775px;top:359px" width="12" height="10"><polygon points="1,1.5 11,1.5 6,7.5" fill="none" stroke="#cfcfcf" stroke-width="1"/></svg>
<div class="a t" style="left:795px;top:358.00px;font-size:13px;font-weight:700;color:#f0f0f0;letter-spacing:0.15px">Guides and Grid</div>
<div class="a" style="left:775px;top:375px;width:352px;height:210px;background:transparent;border:1px solid #3f3f3f;border-radius:4px"></div>
<div class="a t" style="left:787.3px;top:390.00px;font-size:13px;font-weight:400;color:#ececec;letter-spacing:0.25px">Grid spacing</div>
<div class="a" style="left:787px;top:411px;width:159px;height:22px;background:#1e1e1e;border-radius:3px"></div><div class="a t" style="left:792px;top:416.30px;font-size:13px;font-weight:400;color:#f0f0f0;">10.00</div><div class="a" style="left:933px;top:411px;width:13px;height:22px;background:#393939;border:1px solid #4a4a4a;border-radius:0 3px 3px 0"></div><svg class="a" style="left:933px;top:411px" width="13" height="22"><polygon points="2.5,8.5 10.5,8.5 6.5,4.0" fill="#d0d0d0"/><polygon points="2.5,13.5 10.5,13.5 6.5,18.0" fill="#c8c8c8"/></svg>
<div class="a" style="left:954px;top:411px;width:158px;height:22px;background:linear-gradient(#444,#3b3b3b);border:1px solid #565656;border-radius:3px"></div><div class="a t" style="left:959px;top:416.00px;font-size:13px;font-weight:400;color:#000;-webkit-text-stroke:0.3px #000">mm</div><svg class="a" style="left:1096px;top:411px" width="12" height="22"><polygon points="1.5,9.0 9.5,9.0 5.5,13.0" fill="#111"/></svg>
<div class="a t" style="left:787.3px;top:443.00px;font-size:13px;font-weight:400;color:#ececec;letter-spacing:0.25px">Grid offset</div>
<div class="a" style="left:787px;top:465px;width:159px;height:21px;background:#1e1e1e;border-radius:3px"></div><div class="a t" style="left:792px;top:470.30px;font-size:13px;font-weight:400;color:#f0f0f0;">x: 0.00</div><div class="a" style="left:933px;top:465px;width:13px;height:21px;background:#393939;border:1px solid #4a4a4a;border-radius:0 3px 3px 0"></div><svg class="a" style="left:933px;top:465px" width="13" height="21"><polygon points="2.5,8.0 10.5,8.0 6.5,3.5" fill="#d0d0d0"/><polygon points="2.5,13.0 10.5,13.0 6.5,17.5" fill="#7a7a7a"/></svg>
<div class="a" style="left:787px;top:496px;width:159px;height:21px;background:#1e1e1e;border-radius:3px"></div><div class="a t" style="left:792px;top:501.30px;font-size:13px;font-weight:400;color:#f0f0f0;">y: 0.00</div><div class="a" style="left:933px;top:496px;width:13px;height:21px;background:#393939;border:1px solid #4a4a4a;border-radius:0 3px 3px 0"></div><svg class="a" style="left:933px;top:496px" width="13" height="21"><polygon points="2.5,8.0 10.5,8.0 6.5,3.5" fill="#d0d0d0"/><polygon points="2.5,13.0 10.5,13.0 6.5,17.5" fill="#7a7a7a"/></svg>
<div class="a" style="left:954px;top:480px;width:158px;height:22px;background:linear-gradient(#444,#3b3b3b);border:1px solid #565656;border-radius:3px"></div><div class="a t" style="left:959px;top:485.00px;font-size:13px;font-weight:400;color:#000;-webkit-text-stroke:0.3px #000">mm</div><svg class="a" style="left:1096px;top:480px" width="12" height="22"><polygon points="1.5,9.0 9.5,9.0 5.5,13.0" fill="#111"/></svg>
<div class="a t" style="left:787.3px;top:527.00px;font-size:13px;font-weight:400;color:#ececec;">Snap tolerance</div>
<div class="a" style="left:787px;top:548px;width:325px;height:22px;background:#1e1e1e;border-radius:3px"></div><div class="a t" style="left:792px;top:553.30px;font-size:13px;font-weight:400;color:#f0f0f0;">5 px</div><div class="a" style="left:1099px;top:548px;width:13px;height:22px;background:#393939;border:1px solid #4a4a4a;border-radius:0 3px 3px 0"></div><svg class="a" style="left:1099px;top:548px" width="13" height="22"><polygon points="2.5,8.5 10.5,8.5 6.5,4.0" fill="#d0d0d0"/><polygon points="2.5,13.5 10.5,13.5 6.5,18.0" fill="#c8c8c8"/></svg>
</body></html>
